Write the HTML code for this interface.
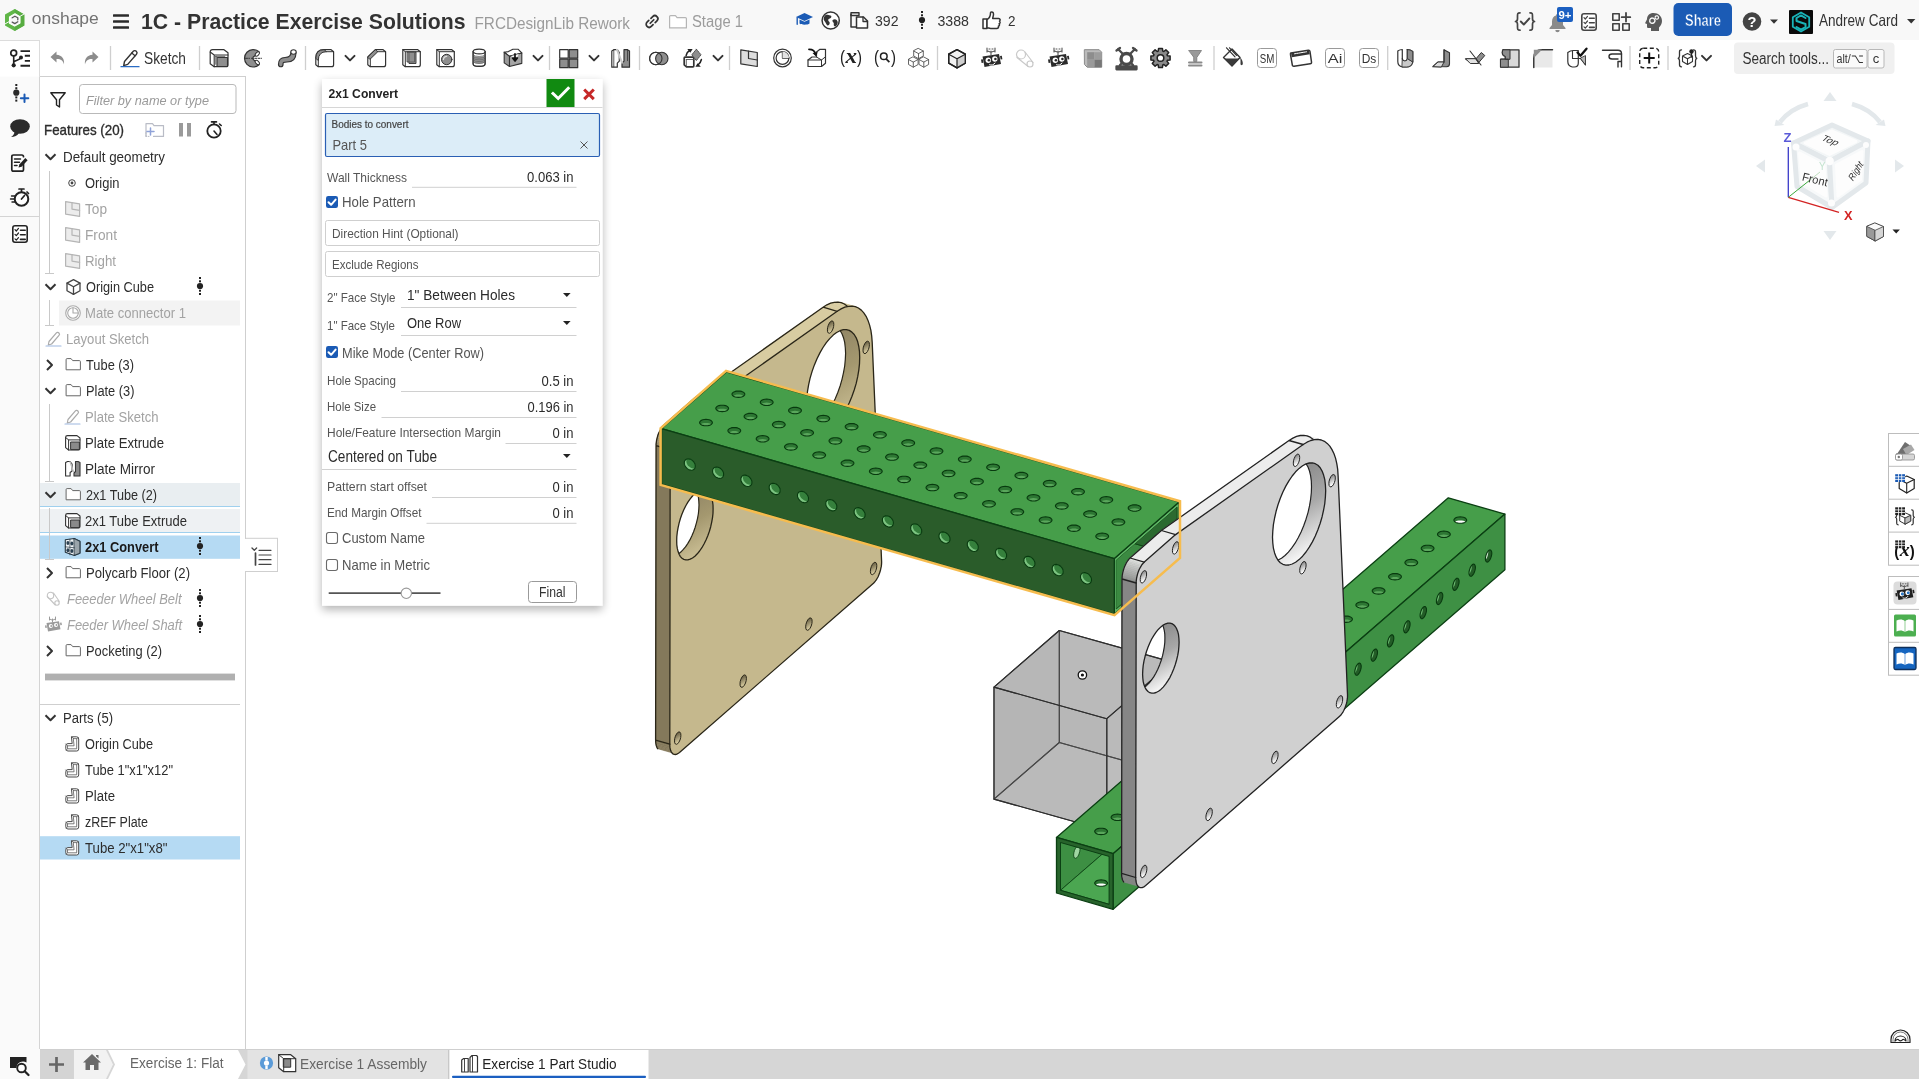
<!DOCTYPE html><html lang="en"><head><meta charset="utf-8"><title>1C - Practice Exercise Solutions | Exercise 1 Part Studio</title><style>html,body{margin:0;padding:0;background:#fff;overflow:hidden}svg{display:block;will-change:transform}text{font-family:"Liberation Sans",sans-serif;white-space:pre}</style></head><body>
<svg width="1919" height="1079" viewBox="0 0 1919 1079">
<g id="chrome">
<rect x="0" y="0" width="1919" height="40" fill="#f8f8f8"/>
<rect x="0" y="40" width="40" height="1039" fill="#fafafa"/>
<line x1="39.5" y1="76" x2="39.5" y2="1049" stroke="#d4d4d4" stroke-width="1" />
<rect x="0" y="40" width="39.5" height="36.5" fill="#ffffff"/>
<line x1="0" y1="40.5" x2="39.5" y2="40.5" stroke="#dcdcdc" stroke-width="1" />
<line x1="39.5" y1="40" x2="39.5" y2="76" stroke="#dcdcdc" stroke-width="1" />
<line x1="0" y1="216.5" x2="39" y2="216.5" stroke="#d4d4d4" stroke-width="1" />
<rect x="40" y="1049" width="1879" height="30" fill="#d6d6d6"/>
</g>
<g id="model" stroke-linejoin="round">
<clipPath id="cht"><path d="M5.5 1.6L6.2 0.8L6.4 0L6.2 -0.8L5.5 -1.6L4.5 -2.3L3.2 -2.8L1.6 -3.1L0 -3.2L-1.7 -3.1L-3.2 -2.8L-4.5 -2.3L-5.5 -1.6L-6.2 -0.8L-6.4 0L-6.2 0.8L-5.5 1.6L-4.5 2.3L-3.2 2.8L-1.6 3.1L0 3.2L1.7 3.1L3.2 2.8L4.5 2.3Z"/></clipPath><defs><g id="ht"><path d="M5.5 1.6L6.2 0.8L6.4 0L6.2 -0.8L5.5 -1.6L4.5 -2.3L3.2 -2.8L1.6 -3.1L0 -3.2L-1.7 -3.1L-3.2 -2.8L-4.5 -2.3L-5.5 -1.6L-6.2 -0.8L-6.4 0L-6.2 0.8L-5.5 1.6L-4.5 2.3L-3.2 2.8L-1.6 3.1L0 3.2L1.7 3.1L3.2 2.8L4.5 2.3Z" fill="#2d7733"/><path d="M5.5 5.1L6.2 4.3L6.4 3.5L6.2 2.7L5.5 1.9L4.5 1.2L3.2 0.7L1.6 0.4L0 0.3L-1.7 0.4L-3.2 0.7L-4.5 1.2L-5.5 1.9L-6.2 2.7L-6.4 3.5L-6.2 4.3L-5.5 5.1L-4.5 5.8L-3.2 6.3L-1.6 6.6L0 6.7L1.7 6.6L3.2 6.3L4.5 5.8Z" fill="#5aa75c" clip-path="url(#cht)"/><path d="M5.5 1.6L6.2 0.8L6.4 0L6.2 -0.8L5.5 -1.6L4.5 -2.3L3.2 -2.8L1.6 -3.1L0 -3.2L-1.7 -3.1L-3.2 -2.8L-4.5 -2.3L-5.5 -1.6L-6.2 -0.8L-6.4 0L-6.2 0.8L-5.5 1.6L-4.5 2.3L-3.2 2.8L-1.6 3.1L0 3.2L1.7 3.1L3.2 2.8L4.5 2.3Z" fill="none" stroke="#083a0f" stroke-width="1.1"/></g></defs>
<clipPath id="cht1"><path d="M5.5 1.6L6.2 0.8L6.4 0L6.2 -0.8L5.5 -1.6L4.5 -2.3L3.2 -2.8L1.6 -3.1L0 -3.2L-1.7 -3.1L-3.2 -2.8L-4.5 -2.3L-5.5 -1.6L-6.2 -0.8L-6.4 0L-6.2 0.8L-5.5 1.6L-4.5 2.3L-3.2 2.8L-1.6 3.1L0 3.2L1.7 3.1L3.2 2.8L4.5 2.3Z"/></clipPath><defs><g id="ht1"><path d="M5.5 1.6L6.2 0.8L6.4 0L6.2 -0.8L5.5 -1.6L4.5 -2.3L3.2 -2.8L1.6 -3.1L0 -3.2L-1.7 -3.1L-3.2 -2.8L-4.5 -2.3L-5.5 -1.6L-6.2 -0.8L-6.4 0L-6.2 0.8L-5.5 1.6L-4.5 2.3L-3.2 2.8L-1.6 3.1L0 3.2L1.7 3.1L3.2 2.8L4.5 2.3Z" fill="#2d7733"/><path d="M5.5 5.1L6.2 4.3L6.4 3.5L6.2 2.7L5.5 1.9L4.5 1.2L3.2 0.7L1.6 0.4L0 0.3L-1.7 0.4L-3.2 0.7L-4.5 1.2L-5.5 1.9L-6.2 2.7L-6.4 3.5L-6.2 4.3L-5.5 5.1L-4.5 5.8L-3.2 6.3L-1.6 6.6L0 6.7L1.7 6.6L3.2 6.3L4.5 5.8Z" fill="#5aa75c" clip-path="url(#cht1)"/><path d="M5.5 1.6L6.2 0.8L6.4 0L6.2 -0.8L5.5 -1.6L4.5 -2.3L3.2 -2.8L1.6 -3.1L0 -3.2L-1.7 -3.1L-3.2 -2.8L-4.5 -2.3L-5.5 -1.6L-6.2 -0.8L-6.4 0L-6.2 0.8L-5.5 1.6L-4.5 2.3L-3.2 2.8L-1.6 3.1L0 3.2L1.7 3.1L3.2 2.8L4.5 2.3Z" fill="none" stroke="#083a0f" stroke-width="1.1"/></g></defs>
<clipPath id="chtw"><path d="M5.5 1.6L6.2 0.8L6.4 0L6.2 -0.8L5.5 -1.6L4.5 -2.3L3.2 -2.8L1.6 -3.1L0 -3.2L-1.7 -3.1L-3.2 -2.8L-4.5 -2.3L-5.5 -1.6L-6.2 -0.8L-6.4 0L-6.2 0.8L-5.5 1.6L-4.5 2.3L-3.2 2.8L-1.6 3.1L0 3.2L1.7 3.1L3.2 2.8L4.5 2.3Z"/></clipPath><defs><g id="htw"><path d="M5.5 1.6L6.2 0.8L6.4 0L6.2 -0.8L5.5 -1.6L4.5 -2.3L3.2 -2.8L1.6 -3.1L0 -3.2L-1.7 -3.1L-3.2 -2.8L-4.5 -2.3L-5.5 -1.6L-6.2 -0.8L-6.4 0L-6.2 0.8L-5.5 1.6L-4.5 2.3L-3.2 2.8L-1.6 3.1L0 3.2L1.7 3.1L3.2 2.8L4.5 2.3Z" fill="#2d7733"/><path d="M5.5 5.1L6.2 4.3L6.4 3.5L6.2 2.7L5.5 1.9L4.5 1.2L3.2 0.7L1.6 0.4L0 0.3L-1.7 0.4L-3.2 0.7L-4.5 1.2L-5.5 1.9L-6.2 2.7L-6.4 3.5L-6.2 4.3L-5.5 5.1L-4.5 5.8L-3.2 6.3L-1.6 6.6L0 6.7L1.7 6.6L3.2 6.3L4.5 5.8Z" fill="#ffffff" clip-path="url(#chtw)"/><path d="M5.5 1.6L6.2 0.8L6.4 0L6.2 -0.8L5.5 -1.6L4.5 -2.3L3.2 -2.8L1.6 -3.1L0 -3.2L-1.7 -3.1L-3.2 -2.8L-4.5 -2.3L-5.5 -1.6L-6.2 -0.8L-6.4 0L-6.2 0.8L-5.5 1.6L-4.5 2.3L-3.2 2.8L-1.6 3.1L0 3.2L1.7 3.1L3.2 2.8L4.5 2.3Z" fill="none" stroke="#083a0f" stroke-width="1.1"/></g></defs>
<clipPath id="chf"><path d="M5.5 1.6L5.4 0.1L4.8 -1.3L3.9 -2.7L2.8 -3.9L1.4 -4.9L0 -5.4L-1.4 -5.7L-2.8 -5.5L-3.9 -5L-4.8 -4.1L-5.4 -2.9L-5.5 -1.6L-5.4 -0.1L-4.8 1.3L-3.9 2.7L-2.8 3.9L-1.4 4.9L0 5.4L1.4 5.7L2.8 5.5L3.9 5L4.8 4.1L5.4 2.9Z"/></clipPath><defs><g id="hf"><path d="M5.5 1.6L5.4 0.1L4.8 -1.3L3.9 -2.7L2.8 -3.9L1.4 -4.9L0 -5.4L-1.4 -5.7L-2.8 -5.5L-3.9 -5L-4.8 -4.1L-5.4 -2.9L-5.5 -1.6L-5.4 -0.1L-4.8 1.3L-3.9 2.7L-2.8 3.9L-1.4 4.9L0 5.4L1.4 5.7L2.8 5.5L3.9 5L4.8 4.1L5.4 2.9Z" fill="#7cc481"/><path d="M7.6 -0.2L7.4 -1.7L6.8 -3.1L6 -4.5L4.8 -5.7L3.5 -6.6L2 -7.2L0.6 -7.5L-0.7 -7.3L-1.9 -6.8L-2.8 -5.9L-3.3 -4.7L-3.5 -3.4L-3.3 -1.9L-2.8 -0.4L-1.9 0.9L-0.7 2.1L0.6 3.1L2 3.7L3.5 3.9L4.8 3.7L6 3.2L6.8 2.3L7.4 1.2Z" fill="#35803c" clip-path="url(#chf)"/><path d="M5.5 1.6L5.4 0.1L4.8 -1.3L3.9 -2.7L2.8 -3.9L1.4 -4.9L0 -5.4L-1.4 -5.7L-2.8 -5.5L-3.9 -5L-4.8 -4.1L-5.4 -2.9L-5.5 -1.6L-5.4 -0.1L-4.8 1.3L-3.9 2.7L-2.8 3.9L-1.4 4.9L0 5.4L1.4 5.7L2.8 5.5L3.9 5L4.8 4.1L5.4 2.9Z" fill="none" stroke="#083a0f" stroke-width="1.1"/></g></defs>
<clipPath id="chs"><path d="M3.2 -2.8L3.1 -4.1L2.7 -5.1L2.2 -5.8L1.6 -6.1L0.8 -6L0 -5.4L-0.8 -4.5L-1.6 -3.3L-2.2 -1.9L-2.7 -0.3L-3.1 1.3L-3.2 2.8L-3.1 4.1L-2.7 5.1L-2.2 5.8L-1.6 6.1L-0.8 6L0 5.4L0.8 4.5L1.6 3.3L2.2 1.9L2.7 0.3L3.1 -1.3Z"/></clipPath><defs><g id="hs"><path d="M3.2 -2.8L3.1 -4.1L2.7 -5.1L2.2 -5.8L1.6 -6.1L0.8 -6L0 -5.4L-0.8 -4.5L-1.6 -3.3L-2.2 -1.9L-2.7 -0.3L-3.1 1.3L-3.2 2.8L-3.1 4.1L-2.7 5.1L-2.2 5.8L-1.6 6.1L-0.8 6L0 5.4L0.8 4.5L1.6 3.3L2.2 1.9L2.7 0.3L3.1 -1.3Z" fill="#235c27"/><path d="M-0.4 -3.8L-0.5 -5.1L-0.8 -6.2L-1.3 -6.8L-2 -7.1L-2.7 -7L-3.6 -6.5L-4.4 -5.6L-5.2 -4.4L-5.8 -2.9L-6.3 -1.3L-6.6 0.2L-6.7 1.8L-6.6 3.1L-6.3 4.1L-5.8 4.8L-5.2 5.1L-4.4 5L-3.6 4.4L-2.7 3.5L-2 2.3L-1.3 0.9L-0.8 -0.7L-0.5 -2.3Z" fill="#6fbd73" clip-path="url(#chs)"/><path d="M3.2 -2.8L3.1 -4.1L2.7 -5.1L2.2 -5.8L1.6 -6.1L0.8 -6L0 -5.4L-0.8 -4.5L-1.6 -3.3L-2.2 -1.9L-2.7 -0.3L-3.1 1.3L-3.2 2.8L-3.1 4.1L-2.7 5.1L-2.2 5.8L-1.6 6.1L-0.8 6L0 5.4L0.8 4.5L1.6 3.3L2.2 1.9L2.7 0.3L3.1 -1.3Z" fill="none" stroke="#083a0f" stroke-width="1.1"/></g></defs>
<clipPath id="chsw"><path d="M3.2 -2.8L3.1 -4.1L2.7 -5.1L2.2 -5.8L1.6 -6.1L0.8 -6L0 -5.4L-0.8 -4.5L-1.6 -3.3L-2.2 -1.9L-2.7 -0.3L-3.1 1.3L-3.2 2.8L-3.1 4.1L-2.7 5.1L-2.2 5.8L-1.6 6.1L-0.8 6L0 5.4L0.8 4.5L1.6 3.3L2.2 1.9L2.7 0.3L3.1 -1.3Z"/></clipPath><defs><g id="hsw"><path d="M3.2 -2.8L3.1 -4.1L2.7 -5.1L2.2 -5.8L1.6 -6.1L0.8 -6L0 -5.4L-0.8 -4.5L-1.6 -3.3L-2.2 -1.9L-2.7 -0.3L-3.1 1.3L-3.2 2.8L-3.1 4.1L-2.7 5.1L-2.2 5.8L-1.6 6.1L-0.8 6L0 5.4L0.8 4.5L1.6 3.3L2.2 1.9L2.7 0.3L3.1 -1.3Z" fill="#235c27"/><path d="M-0.4 -3.8L-0.5 -5.1L-0.8 -6.2L-1.3 -6.8L-2 -7.1L-2.7 -7L-3.6 -6.5L-4.4 -5.6L-5.2 -4.4L-5.8 -2.9L-6.3 -1.3L-6.6 0.2L-6.7 1.8L-6.6 3.1L-6.3 4.1L-5.8 4.8L-5.2 5.1L-4.4 5L-3.6 4.4L-2.7 3.5L-2 2.3L-1.3 0.9L-0.8 -0.7L-0.5 -2.3Z" fill="#d8efd9" clip-path="url(#chsw)"/><path d="M3.2 -2.8L3.1 -4.1L2.7 -5.1L2.2 -5.8L1.6 -6.1L0.8 -6L0 -5.4L-0.8 -4.5L-1.6 -3.3L-2.2 -1.9L-2.7 -0.3L-3.1 1.3L-3.2 2.8L-3.1 4.1L-2.7 5.1L-2.2 5.8L-1.6 6.1L-0.8 6L0 5.4L0.8 4.5L1.6 3.3L2.2 1.9L2.7 0.3L3.1 -1.3Z" fill="none" stroke="#083a0f" stroke-width="1.1"/></g></defs>
<g id="ocube"><polygon points="1059.3,630.5 1172.1,662.1 1172.1,774.1 1059.3,742.5" fill="rgba(125,125,125,0.33)" stroke="#2e2e2e" stroke-width="1.1"/><polygon points="994,687.1 1059.3,630.5 1059.3,742.5 994,799.1" fill="rgba(125,125,125,0.36)" stroke="#2e2e2e" stroke-width="1.1"/><polygon points="994,799.1 1106.8,830.7 1172.1,774.1 1059.3,742.5" fill="rgba(125,125,125,0.3)" stroke="#2e2e2e" stroke-width="1.1"/><polygon points="1106.8,718.7 1172.1,662.1 1172.1,774.1 1106.8,830.7" fill="rgba(125,125,125,0.3)" stroke="#2e2e2e" stroke-width="1.1"/><polygon points="994,687.1 1106.8,718.7 1106.8,830.7 994,799.1" fill="rgba(125,125,125,0.33)" stroke="#2e2e2e" stroke-width="1.1"/><polygon points="994,687.1 1106.8,718.7 1172.1,662.1 1059.3,630.5" fill="rgba(125,125,125,0.3)" stroke="#2e2e2e" stroke-width="1.1"/></g>
<polygon points="1056.5,837.4 1113.1,853.7 1504.9,514.1 1448.3,497.8" fill="#469e4a" stroke="#0b3f13" stroke-width="1.3" />
<polygon points="1113.1,853.7 1504.9,514.1 1504.9,569.7 1113.1,909.3" fill="#3e9044" stroke="#0b3f13" stroke-width="1.3" />
<polygon points="1056.5,837.4 1113.1,853.7 1113.1,909.3 1056.5,893" fill="#27632b" stroke="#0b3f13" stroke-width="1.3" />
<clipPath id="t1in"><polygon points="1060.5,842.5 1109.1,856.4 1109.1,904.3 1060.5,890.3"/></clipPath>
<g clip-path="url(#t1in)">
<polygon points="1060.5,842.5 1109.1,856.4 1109.1,904.3 1060.5,890.3" fill="#3c8c42" />
<polygon points="1060.5,842.5 1452.3,502.9 1452.3,550.7 1060.5,890.3" fill="#3d8f43" stroke="#0b3f13" stroke-width="0.8" />
<polygon points="1060.5,890.3 1109.1,904.3 1500.9,564.7 1452.3,550.7" fill="#4ba651" stroke="#0b3f13" stroke-width="0.8" />
<use href="#htw" x="1101.1" y="883.1"/>
<path d="M1080 849.4L1079.7 847.6L1079 846.4L1078 846.1L1076.8 846.8L1075.6 848.2L1074.5 850.3L1073.9 852.7L1073.6 855L1073.9 856.9L1074.5 858L1075.6 858.3L1076.8 857.7L1078 856.2L1079 854.1L1079.7 851.7Z" fill="#9fd6a2" stroke="#0b3f13" stroke-width="0.8"/>
</g>
<polygon points="1060.5,842.5 1109.1,856.4 1109.1,904.3 1060.5,890.3" fill="none" stroke="#0b3f13" stroke-width="1"/>
<use href="#ht1" x="1101.1" y="831.4"/><use href="#ht1" x="1117.5" y="817.3"/><use href="#ht1" x="1133.8" y="803.1"/><use href="#ht1" x="1150.1" y="789"/><use href="#ht1" x="1166.4" y="774.8"/><use href="#ht1" x="1182.8" y="760.7"/><use href="#ht1" x="1199.1" y="746.5"/><use href="#ht1" x="1215.4" y="732.4"/><use href="#ht1" x="1231.7" y="718.2"/><use href="#ht1" x="1248" y="704.1"/><use href="#ht1" x="1264.4" y="689.9"/><use href="#ht1" x="1280.7" y="675.8"/><use href="#ht1" x="1297" y="661.6"/><use href="#ht1" x="1313.3" y="647.5"/><use href="#ht1" x="1329.7" y="633.3"/><use href="#ht1" x="1346" y="619.2"/><use href="#ht1" x="1362.3" y="605"/><use href="#ht1" x="1378.6" y="590.9"/><use href="#ht1" x="1395" y="576.7"/><use href="#ht1" x="1411.3" y="562.6"/><use href="#ht1" x="1427.6" y="548.4"/><use href="#ht1" x="1443.9" y="534.3"/>
<use href="#htw" x="1460.3" y="520.1"/>
<use href="#hs" x="1129.4" y="867.3"/><use href="#hs" x="1145.8" y="853.2"/><use href="#hs" x="1162.1" y="839"/><use href="#hs" x="1178.4" y="824.9"/><use href="#hs" x="1194.7" y="810.7"/><use href="#hs" x="1211" y="796.6"/><use href="#hs" x="1227.4" y="782.4"/><use href="#hs" x="1243.7" y="768.3"/><use href="#hs" x="1260" y="754.1"/><use href="#hs" x="1276.3" y="740"/><use href="#hs" x="1292.7" y="725.8"/><use href="#hs" x="1309" y="711.7"/><use href="#hs" x="1325.3" y="697.5"/><use href="#hs" x="1341.6" y="683.4"/><use href="#hs" x="1358" y="669.2"/><use href="#hs" x="1374.3" y="655.1"/><use href="#hs" x="1390.6" y="640.9"/><use href="#hs" x="1406.9" y="626.8"/><use href="#hs" x="1423.3" y="612.6"/><use href="#hs" x="1439.6" y="598.5"/><use href="#hs" x="1455.9" y="584.3"/><use href="#hs" x="1472.2" y="570.2"/>
<use href="#hsw" x="1488.6" y="556"/>
<g transform="translate(1,1.2)">
<polygon points="655.1,444.5 655.1,442.9 669.3,447 669.2,448.6" fill="#897e5f" stroke="#897e5f" stroke-width="0.6"/>
<polygon points="655.1,442.9 655.3,441.3 669.4,445.3 669.3,447" fill="#908565" stroke="#908565" stroke-width="0.6"/>
<polygon points="655.3,441.3 655.5,439.5 669.7,443.6 669.4,445.3" fill="#978c6b" stroke="#978c6b" stroke-width="0.6"/>
<polygon points="655.5,439.5 655.9,437.8 670,441.9 669.7,443.6" fill="#9d9170" stroke="#9d9170" stroke-width="0.6"/>
<polygon points="655.9,437.8 656.3,436.1 670.5,440.1 670,441.9" fill="#a29774" stroke="#a29774" stroke-width="0.6"/>
<polygon points="656.3,436.1 656.8,434.3 671,438.4 670.5,440.1" fill="#a79b78" stroke="#a79b78" stroke-width="0.6"/>
<polygon points="656.8,434.3 657.4,432.6 671.6,436.7 671,438.4" fill="#aca07c" stroke="#aca07c" stroke-width="0.6"/>
<polygon points="657.4,432.6 658.1,431 672.3,435.1 671.6,436.7" fill="#b0a580" stroke="#b0a580" stroke-width="0.6"/>
<polygon points="658.1,431 658.9,429.5 673,433.5 672.3,435.1" fill="#b5aa84" stroke="#b5aa84" stroke-width="0.6"/>
<polygon points="658.9,429.5 659.7,428 673.8,432.1 673,433.5" fill="#baae88" stroke="#baae88" stroke-width="0.6"/>
<polygon points="659.7,428 660.5,426.7 674.6,430.8 673.8,432.1" fill="#bfb48c" stroke="#bfb48c" stroke-width="0.6"/>
<polygon points="660.5,426.7 661.4,425.5 675.5,429.6 674.6,430.8" fill="#c5b991" stroke="#c5b991" stroke-width="0.6"/>
<polygon points="661.4,425.5 662.3,424.5 676.4,428.5 675.5,429.6" fill="#ccc097" stroke="#ccc097" stroke-width="0.6"/>
<polygon points="662.3,424.5 663.2,423.6 677.3,427.6 676.4,428.5" fill="#d3c79d" stroke="#d3c79d" stroke-width="0.6"/>
<polygon points="663.2,423.6 694.5,396.1 708.6,400.1 677.3,427.6" fill="#d8cca1" stroke="#d8cca1" stroke-width="0.6"/>
<polygon points="694.5,396.1 822.1,306 836.2,310.1 708.6,400.1" fill="#d8cca1" stroke="#d8cca1" stroke-width="0.6"/>
<polygon points="822.1,306 825.9,303.6 840.1,307.7 836.2,310.1" fill="#d8cca1" stroke="#d8cca1" stroke-width="0.6"/>
<polygon points="825.9,303.6 829.7,302 843.8,306 840.1,307.7" fill="#d8cca1" stroke="#d8cca1" stroke-width="0.6"/>
<polygon points="829.7,302 833.3,301.1 847.5,305.1 843.8,306" fill="#d8cca1" stroke="#d8cca1" stroke-width="0.6"/>
<polygon points="833.3,301.1 836.8,300.9 851,304.9 847.5,305.1" fill="#d8cca1" stroke="#d8cca1" stroke-width="0.6"/>
<polygon points="836.8,300.9 840.2,301.5 854.3,305.5 851,304.9" fill="#d8cca1" stroke="#d8cca1" stroke-width="0.6"/>
<polygon points="840.2,301.5 843.3,302.8 857.4,306.8 854.3,305.5" fill="#d8cca1" stroke="#d8cca1" stroke-width="0.6"/>
<polygon points="843.3,302.8 846.1,304.8 860.3,308.9 857.4,306.8" fill="#d8cca1" stroke="#d8cca1" stroke-width="0.6"/>
<polygon points="656.7,747.5 656.1,746.6 670.3,750.6 670.9,751.6" fill="#84795b" stroke="#84795b" stroke-width="0.6"/>
<polygon points="656.1,746.6 655.6,745.4 669.7,749.4 670.3,750.6" fill="#84795b" stroke="#84795b" stroke-width="0.6"/>
<polygon points="655.6,745.4 655.2,744 669.3,748.1 669.7,749.4" fill="#84795b" stroke="#84795b" stroke-width="0.6"/>
<polygon points="655.2,744 654.9,742.5 669,746.5 669.3,748.1" fill="#84795b" stroke="#84795b" stroke-width="0.6"/>
<polygon points="654.9,742.5 654.7,740.8 668.8,744.8 669,746.5" fill="#84795b" stroke="#84795b" stroke-width="0.6"/>
<polygon points="654.7,740.8 654.6,739 668.8,743 668.8,744.8" fill="#84795b" stroke="#84795b" stroke-width="0.6"/>
<polygon points="654.6,739 655.1,444.5 669.2,448.6 668.8,743" fill="#84795b" stroke="#84795b" stroke-width="0.6"/>
<path d="M669.2 448.6L669.3 447L669.4 445.3L669.7 443.6L670 441.9L670.5 440.1L671 438.4L671.6 436.7L672.3 435.1L673 433.5L673.8 432.1L674.6 430.8L675.5 429.6L676.4 428.5L677.3 427.6L708.6 400.1L836.2 310.1L840.1 307.7L843.8 306L847.5 305.1L851 304.9L854.3 305.5L857.4 306.8L860.3 308.9L862.8 311.7L865.1 315.1L867 319.2L868.6 323.9L869.9 329.2L870.7 334.9L871.2 341.2L880.6 560.1L880.6 561.7L880.5 563.4L880.3 565.2L879.9 567L879.5 568.8L879 570.6L878.4 572.4L877.7 574.1L877 575.8L876.1 577.3L875.3 578.7L874.3 580L873.4 581.1L872.5 582L678.5 751.3L677.4 752.1L676.3 752.7L675.3 753.1L674.3 753.3L673.3 753.2L672.4 752.9L671.6 752.4L670.9 751.6L670.3 750.6L669.7 749.4L669.3 748.1L669 746.5L668.8 744.8L668.8 743Z" fill="#c5b88d" stroke="#2a2618" stroke-width="1.3"/>
<path d="M655.1 444.5L655.1 442.9L655.3 441.3L655.5 439.5L655.9 437.8L656.3 436.1L656.8 434.3L657.4 432.6L658.1 431L658.9 429.5L659.7 428L660.5 426.7L661.4 425.5L662.3 424.5L663.2 423.6L694.5 396.1L822.1 306L825.9 303.6L829.7 302L833.3 301.1L836.8 300.9L840.2 301.5L843.3 302.8L846.1 304.8M656.7 747.5L656.1 746.6L655.6 745.4L655.2 744L654.9 742.5L654.7 740.8L654.6 739L655.1 444.5M655.1 444.5L669.2 448.6M663.2 423.6L677.3 427.6M694.5 396.1L708.6 400.1M822.1 306L836.2 310.1M654.6 739L668.8 743" fill="none" stroke="#2a2618" stroke-width="1.3" stroke-linecap="round"/>
<linearGradient id="wgT" x1="0" y1="0" x2="0.3" y2="1"><stop offset="0" stop-color="#8a7f62"/><stop offset="0.55" stop-color="#a4986f"/><stop offset="1" stop-color="#c9bd93"/></linearGradient>
<clipPath id="hcT0"><path d="M858.7 356.3L858.5 350.5L857.8 345.3L856.7 340.6L855.2 336.6L853.2 333.3L850.9 330.9L848.3 329.2L845.4 328.4L842.3 328.5L839 329.5L835.6 331.3L832.2 333.9L828.7 337.4L825.3 341.5L822 346.3L818.9 351.7L816 357.5L813.4 363.7L811.1 370.2L809.1 376.9L807.6 383.6L806.5 390.2L805.8 396.6L805.6 402.8L805.8 408.5L806.5 413.8L807.6 418.5L809.1 422.5L811.1 425.7L813.4 428.2L816 429.8L818.9 430.6L822 430.5L825.3 429.6L828.7 427.8L832.2 425.1L835.6 421.7L839 417.5L842.3 412.8L845.4 407.4L848.3 401.5L850.9 395.3L853.2 388.8L855.2 382.2L856.7 375.5L857.8 368.9L858.5 362.4Z"/></clipPath>
<path d="M858.7 356.3L858.5 350.5L857.8 345.3L856.7 340.6L855.2 336.6L853.2 333.3L850.9 330.9L848.3 329.2L845.4 328.4L842.3 328.5L839 329.5L835.6 331.3L832.2 333.9L828.7 337.4L825.3 341.5L822 346.3L818.9 351.7L816 357.5L813.4 363.7L811.1 370.2L809.1 376.9L807.6 383.6L806.5 390.2L805.8 396.6L805.6 402.8L805.8 408.5L806.5 413.8L807.6 418.5L809.1 422.5L811.1 425.7L813.4 428.2L816 429.8L818.9 430.6L822 430.5L825.3 429.6L828.7 427.8L832.2 425.1L835.6 421.7L839 417.5L842.3 412.8L845.4 407.4L848.3 401.5L850.9 395.3L853.2 388.8L855.2 382.2L856.7 375.5L857.8 368.9L858.5 362.4Z" fill="url(#wgT)"/>
<g clip-path="url(#hcT0)"><path d="M844.6 352.2L844.3 346.5L843.7 341.2L842.5 336.5L841 332.5L839.1 329.3L836.8 326.8L834.2 325.1L831.3 324.4L828.2 324.4L824.9 325.4L821.5 327.2L818 329.9L814.5 333.3L811.1 337.4L807.8 342.2L804.7 347.6L801.8 353.4L799.2 359.7L796.9 366.2L795 372.8L793.5 379.5L792.3 386.1L791.7 392.6L791.4 398.7L791.7 404.5L792.3 409.7L793.5 414.4L795 418.4L796.9 421.7L799.2 424.1L801.8 425.8L804.7 426.6L807.8 426.5L811.1 425.5L814.5 423.7L818 421.1L821.5 417.6L824.9 413.5L828.2 408.7L831.3 403.3L834.2 397.5L836.8 391.3L839.1 384.8L841 378.1L842.5 371.4L843.7 364.8L844.3 358.4Z" fill="#ffffff"/><path d="M844.6 352.2L844.3 346.5L843.7 341.2L842.5 336.5L841 332.5L839.1 329.3L836.8 326.8L834.2 325.1L831.3 324.4L828.2 324.4L824.9 325.4L821.5 327.2L818 329.9L814.5 333.3L811.1 337.4L807.8 342.2L804.7 347.6L801.8 353.4L799.2 359.7L796.9 366.2L795 372.8L793.5 379.5L792.3 386.1L791.7 392.6L791.4 398.7L791.7 404.5L792.3 409.7L793.5 414.4L795 418.4L796.9 421.7L799.2 424.1L801.8 425.8L804.7 426.6L807.8 426.5L811.1 425.5L814.5 423.7L818 421.1L821.5 417.6L824.9 413.5L828.2 408.7L831.3 403.3L834.2 397.5L836.8 391.3L839.1 384.8L841 378.1L842.5 371.4L843.7 364.8L844.3 358.4Z" fill="none" stroke="#2a2618" stroke-width="1.2"/></g>
<path d="M858.7 356.3L858.5 350.5L857.8 345.3L856.7 340.6L855.2 336.6L853.2 333.3L850.9 330.9L848.3 329.2L845.4 328.4L842.3 328.5L839 329.5L835.6 331.3L832.2 333.9L828.7 337.4L825.3 341.5L822 346.3L818.9 351.7L816 357.5L813.4 363.7L811.1 370.2L809.1 376.9L807.6 383.6L806.5 390.2L805.8 396.6L805.6 402.8L805.8 408.5L806.5 413.8L807.6 418.5L809.1 422.5L811.1 425.7L813.4 428.2L816 429.8L818.9 430.6L822 430.5L825.3 429.6L828.7 427.8L832.2 425.1L835.6 421.7L839 417.5L842.3 412.8L845.4 407.4L848.3 401.5L850.9 395.3L853.2 388.8L855.2 382.2L856.7 375.5L857.8 368.9L858.5 362.4Z" fill="none" stroke="#2a2618" stroke-width="1.3"/>
<clipPath id="hcT1"><path d="M712.1 507.7L712 503.8L711.5 500.2L710.7 497L709.7 494.2L708.4 492L706.8 490.3L705 489.2L703 488.6L700.9 488.7L698.6 489.3L696.3 490.6L693.9 492.4L691.5 494.8L689.2 497.6L686.9 500.9L684.8 504.6L682.8 508.6L681 512.8L679.4 517.3L678.1 521.9L677.1 526.4L676.3 531L675.8 535.4L675.7 539.6L675.8 543.6L676.3 547.2L677.1 550.4L678.1 553.1L679.4 555.4L681 557.1L682.8 558.2L684.8 558.7L686.9 558.7L689.2 558L691.5 556.8L693.9 555L696.3 552.6L698.6 549.8L700.9 546.5L703 542.8L705 538.8L706.8 534.5L708.4 530.1L709.7 525.5L710.7 520.9L711.5 516.4L712 512Z"/></clipPath>
<path d="M712.1 507.7L712 503.8L711.5 500.2L710.7 497L709.7 494.2L708.4 492L706.8 490.3L705 489.2L703 488.6L700.9 488.7L698.6 489.3L696.3 490.6L693.9 492.4L691.5 494.8L689.2 497.6L686.9 500.9L684.8 504.6L682.8 508.6L681 512.8L679.4 517.3L678.1 521.9L677.1 526.4L676.3 531L675.8 535.4L675.7 539.6L675.8 543.6L676.3 547.2L677.1 550.4L678.1 553.1L679.4 555.4L681 557.1L682.8 558.2L684.8 558.7L686.9 558.7L689.2 558L691.5 556.8L693.9 555L696.3 552.6L698.6 549.8L700.9 546.5L703 542.8L705 538.8L706.8 534.5L708.4 530.1L709.7 525.5L710.7 520.9L711.5 516.4L712 512Z" fill="url(#wgT)"/>
<g clip-path="url(#hcT1)"><path d="M698 503.7L697.8 499.7L697.4 496.1L696.6 492.9L695.5 490.2L694.2 487.9L692.6 486.2L690.8 485.1L688.9 484.6L686.7 484.6L684.5 485.3L682.1 486.5L679.8 488.3L677.4 490.7L675 493.5L672.8 496.8L670.6 500.5L668.7 504.5L666.9 508.8L665.3 513.2L664 517.8L662.9 522.4L662.1 526.9L661.7 531.3L661.5 535.6L661.7 539.5L662.1 543.1L662.9 546.3L664 549.1L665.3 551.3L666.9 553L668.7 554.1L670.6 554.7L672.8 554.6L675 554L677.4 552.7L679.8 550.9L682.1 548.5L684.5 545.7L686.7 542.4L688.9 538.7L690.8 534.7L692.6 530.5L694.2 526L695.5 521.4L696.6 516.9L697.4 512.3L697.8 507.9Z" fill="#ffffff"/><path d="M698 503.7L697.8 499.7L697.4 496.1L696.6 492.9L695.5 490.2L694.2 487.9L692.6 486.2L690.8 485.1L688.9 484.6L686.7 484.6L684.5 485.3L682.1 486.5L679.8 488.3L677.4 490.7L675 493.5L672.8 496.8L670.6 500.5L668.7 504.5L666.9 508.8L665.3 513.2L664 517.8L662.9 522.4L662.1 526.9L661.7 531.3L661.5 535.6L661.7 539.5L662.1 543.1L662.9 546.3L664 549.1L665.3 551.3L666.9 553L668.7 554.1L670.6 554.7L672.8 554.6L675 554L677.4 552.7L679.8 550.9L682.1 548.5L684.5 545.7L686.7 542.4L688.9 538.7L690.8 534.7L692.6 530.5L694.2 526L695.5 521.4L696.6 516.9L697.4 512.3L697.8 507.9Z" fill="none" stroke="#2a2618" stroke-width="1.2"/></g>
<path d="M712.1 507.7L712 503.8L711.5 500.2L710.7 497L709.7 494.2L708.4 492L706.8 490.3L705 489.2L703 488.6L700.9 488.7L698.6 489.3L696.3 490.6L693.9 492.4L691.5 494.8L689.2 497.6L686.9 500.9L684.8 504.6L682.8 508.6L681 512.8L679.4 517.3L678.1 521.9L677.1 526.4L676.3 531L675.8 535.4L675.7 539.6L675.8 543.6L676.3 547.2L677.1 550.4L678.1 553.1L679.4 555.4L681 557.1L682.8 558.2L684.8 558.7L686.9 558.7L689.2 558L691.5 556.8L693.9 555L696.3 552.6L698.6 549.8L700.9 546.5L703 542.8L705 538.8L706.8 534.5L708.4 530.1L709.7 525.5L710.7 520.9L711.5 516.4L712 512Z" fill="none" stroke="#2a2618" stroke-width="1.3"/>
<defs><linearGradient id="gshT" x1="0.3" y1="0" x2="0.6" y2="1"><stop offset="0.15" stop-color="#6d6448"/><stop offset="0.85" stop-color="#d6ca9e"/></linearGradient><g id="shT"><path d="M3.2 -2.8L3 -4.7L2.3 -5.9L1.2 -6.2L0 -5.6L-1.2 -4.1L-2.3 -1.9L-3 0.5L-3.2 2.8L-3 4.7L-2.3 5.9L-1.2 6.2L0 5.6L1.2 4.1L2.3 1.9L3 -0.5Z" fill="url(#gshT)" stroke="#2a2618" stroke-width="1"/></g></defs>
<use href="#shT" x="829.6" y="325.9"/>
<use href="#shT" x="865.2" y="346.2"/>
<use href="#shT" x="836" y="433.3"/>
<use href="#shT" x="708.6" y="413.4"/>
<use href="#shT" x="676.4" y="442.3"/>
<use href="#shT" x="872.6" y="567.3"/>
<use href="#shT" x="807.9" y="622.9"/>
<use href="#shT" x="742.2" y="679.9"/>
<use href="#shT" x="676.7" y="736.9"/>
</g>
<polygon points="1114.3,558.6 1179.1,501.9 1179.1,557.5 1114.3,614.2" fill="#5fb565" stroke="#0b3f13" stroke-width="1.3" />
<polygon points="1116.3,560.3 1177.1,507.2 1177.1,555.8 1116.3,608.9" fill="#2f7334" stroke="#0b3f13" stroke-width="0.8" />
<clipPath id="t2in"><polygon points="1116.3,560.3 1177.1,507.2 1177.1,555.8 1116.3,608.9"/></clipPath>
<g clip-path="url(#t2in)">
<polygon points="1116.3,608.9 1177.1,555.8 724.3,425.8 663.5,478.9" fill="#3b8a41" stroke="#0b3f13" stroke-width="0.8" />
<polygon points="1177.1,507.2 1177.1,555.8 724.3,425.8 724.3,377.2" fill="#2b6a30" stroke="#0b3f13" stroke-width="0.8" />
</g>
<polygon points="661.5,428.6 1114.3,558.6 1179.1,501.9 726.3,371.9" fill="#469e4a" stroke="#0b3f13" stroke-width="1.3" />
<polygon points="661.5,428.6 1114.3,558.6 1114.3,614.2 661.5,484.2" fill="#2a5c2a" stroke="#0b3f13" stroke-width="1.3" />
<use href="#ht" x="706" y="422.6"/><use href="#ht" x="734.3" y="430.7"/><use href="#ht" x="762.6" y="438.8"/><use href="#ht" x="790.9" y="446.9"/><use href="#ht" x="819.2" y="455.1"/><use href="#ht" x="847.5" y="463.2"/><use href="#ht" x="875.8" y="471.3"/><use href="#ht" x="904.1" y="479.4"/><use href="#ht" x="932.4" y="487.6"/><use href="#ht" x="960.7" y="495.7"/><use href="#ht" x="989" y="503.8"/><use href="#ht" x="1017.3" y="511.9"/><use href="#ht" x="1045.6" y="520.1"/><use href="#ht" x="1073.9" y="528.2"/><use href="#ht" x="1102.2" y="536.3"/><use href="#ht" x="722.2" y="408.4"/><use href="#ht" x="750.5" y="416.5"/><use href="#ht" x="778.8" y="424.6"/><use href="#ht" x="807.1" y="432.8"/><use href="#ht" x="835.4" y="440.9"/><use href="#ht" x="863.7" y="449"/><use href="#ht" x="892" y="457.1"/><use href="#ht" x="920.3" y="465.2"/><use href="#ht" x="948.6" y="473.4"/><use href="#ht" x="976.9" y="481.5"/><use href="#ht" x="1005.2" y="489.6"/><use href="#ht" x="1033.5" y="497.8"/><use href="#ht" x="1061.8" y="505.9"/><use href="#ht" x="1090.1" y="514"/><use href="#ht" x="1118.4" y="522.1"/><use href="#ht" x="738.4" y="394.2"/><use href="#ht" x="766.7" y="402.3"/><use href="#ht" x="795" y="410.5"/><use href="#ht" x="823.3" y="418.6"/><use href="#ht" x="851.6" y="426.7"/><use href="#ht" x="879.9" y="434.8"/><use href="#ht" x="908.2" y="443"/><use href="#ht" x="936.5" y="451.1"/><use href="#ht" x="964.8" y="459.2"/><use href="#ht" x="993.1" y="467.3"/><use href="#ht" x="1021.4" y="475.5"/><use href="#ht" x="1049.7" y="483.6"/><use href="#ht" x="1078" y="491.7"/><use href="#ht" x="1106.3" y="499.8"/><use href="#ht" x="1134.6" y="508"/>
<use href="#hf" x="689.8" y="464.5"/><use href="#hf" x="718.1" y="472.7"/><use href="#hf" x="746.4" y="480.8"/><use href="#hf" x="774.7" y="488.9"/><use href="#hf" x="803" y="497"/><use href="#hf" x="831.3" y="505.2"/><use href="#hf" x="859.6" y="513.3"/><use href="#hf" x="887.9" y="521.4"/><use href="#hf" x="916.2" y="529.5"/><use href="#hf" x="944.5" y="537.6"/><use href="#hf" x="972.8" y="545.8"/><use href="#hf" x="1001.1" y="553.9"/><use href="#hf" x="1029.4" y="562"/><use href="#hf" x="1057.7" y="570.1"/><use href="#hf" x="1086" y="578.3"/>
<g transform="translate(0,0.4)">
<polygon points="1122,578.6 1122.1,577 1136.2,581 1136.2,582.6" fill="#8c8c8c" stroke="#8c8c8c" stroke-width="0.6"/>
<polygon points="1122.1,577 1122.2,575.3 1136.4,579.4 1136.2,581" fill="#959595" stroke="#959595" stroke-width="0.6"/>
<polygon points="1122.2,575.3 1122.5,573.6 1136.6,577.7 1136.4,579.4" fill="#9d9d9d" stroke="#9d9d9d" stroke-width="0.6"/>
<polygon points="1122.5,573.6 1122.8,571.9 1137,575.9 1136.6,577.7" fill="#a4a4a4" stroke="#a4a4a4" stroke-width="0.6"/>
<polygon points="1122.8,571.9 1123.3,570.1 1137.4,574.2 1137,575.9" fill="#aaaaaa" stroke="#aaaaaa" stroke-width="0.6"/>
<polygon points="1123.3,570.1 1123.8,568.4 1137.9,572.5 1137.4,574.2" fill="#b0b0b0" stroke="#b0b0b0" stroke-width="0.6"/>
<polygon points="1123.8,568.4 1124.4,566.7 1138.5,570.8 1137.9,572.5" fill="#b6b6b6" stroke="#b6b6b6" stroke-width="0.6"/>
<polygon points="1124.4,566.7 1125.1,565.1 1139.2,569.1 1138.5,570.8" fill="#bcbcbc" stroke="#bcbcbc" stroke-width="0.6"/>
<polygon points="1125.1,565.1 1125.8,563.5 1140,567.6 1139.2,569.1" fill="#c2c2c2" stroke="#c2c2c2" stroke-width="0.6"/>
<polygon points="1125.8,563.5 1126.6,562.1 1140.8,566.2 1140,567.6" fill="#c8c8c8" stroke="#c8c8c8" stroke-width="0.6"/>
<polygon points="1126.6,562.1 1127.4,560.8 1141.6,564.8 1140.8,566.2" fill="#cecece" stroke="#cecece" stroke-width="0.6"/>
<polygon points="1127.4,560.8 1128.3,559.6 1142.5,563.6 1141.6,564.8" fill="#d5d5d5" stroke="#d5d5d5" stroke-width="0.6"/>
<polygon points="1128.3,559.6 1129.2,558.5 1143.4,562.6 1142.5,563.6" fill="#dddddd" stroke="#dddddd" stroke-width="0.6"/>
<polygon points="1129.2,558.5 1130.1,557.6 1144.3,561.7 1143.4,562.6" fill="#e6e6e6" stroke="#e6e6e6" stroke-width="0.6"/>
<polygon points="1130.1,557.6 1161.4,530.1 1175.6,534.2 1144.3,561.7" fill="#ececec" stroke="#ececec" stroke-width="0.6"/>
<polygon points="1161.4,530.1 1289,440.1 1303.2,444.1 1175.6,534.2" fill="#ececec" stroke="#ececec" stroke-width="0.6"/>
<polygon points="1289,440.1 1292.9,437.7 1307,441.8 1303.2,444.1" fill="#ececec" stroke="#ececec" stroke-width="0.6"/>
<polygon points="1292.9,437.7 1296.6,436 1310.8,440.1 1307,441.8" fill="#ececec" stroke="#ececec" stroke-width="0.6"/>
<polygon points="1296.6,436 1300.3,435.1 1314.4,439.2 1310.8,440.1" fill="#ececec" stroke="#ececec" stroke-width="0.6"/>
<polygon points="1300.3,435.1 1303.8,434.9 1317.9,439 1314.4,439.2" fill="#ececec" stroke="#ececec" stroke-width="0.6"/>
<polygon points="1303.8,434.9 1307.1,435.5 1321.3,439.6 1317.9,439" fill="#ececec" stroke="#ececec" stroke-width="0.6"/>
<polygon points="1307.1,435.5 1310.2,436.8 1324.4,440.9 1321.3,439.6" fill="#ececec" stroke="#ececec" stroke-width="0.6"/>
<polygon points="1310.2,436.8 1313.1,438.9 1327.2,443 1324.4,440.9" fill="#ececec" stroke="#ececec" stroke-width="0.6"/>
<polygon points="1123.7,881.6 1123.1,880.6 1137.2,884.7 1137.8,885.7" fill="#868686" stroke="#868686" stroke-width="0.6"/>
<polygon points="1123.1,880.6 1122.5,879.4 1136.7,883.5 1137.2,884.7" fill="#868686" stroke="#868686" stroke-width="0.6"/>
<polygon points="1122.5,879.4 1122.1,878.1 1136.3,882.1 1136.7,883.5" fill="#868686" stroke="#868686" stroke-width="0.6"/>
<polygon points="1122.1,878.1 1121.8,876.5 1136,880.6 1136.3,882.1" fill="#868686" stroke="#868686" stroke-width="0.6"/>
<polygon points="1121.8,876.5 1121.6,874.8 1135.8,878.9 1136,880.6" fill="#868686" stroke="#868686" stroke-width="0.6"/>
<polygon points="1121.6,874.8 1121.6,873 1135.7,877.1 1135.8,878.9" fill="#868686" stroke="#868686" stroke-width="0.6"/>
<polygon points="1121.6,873 1122,578.6 1136.2,582.6 1135.7,877.1" fill="#868686" stroke="#868686" stroke-width="0.6"/>
<path d="M1136.2 582.6L1136.2 581L1136.4 579.4L1136.6 577.7L1137 575.9L1137.4 574.2L1137.9 572.5L1138.5 570.8L1139.2 569.1L1140 567.6L1140.8 566.2L1141.6 564.8L1142.5 563.6L1143.4 562.6L1144.3 561.7L1175.6 534.2L1303.2 444.1L1307 441.8L1310.8 440.1L1314.4 439.2L1317.9 439L1321.3 439.6L1324.4 440.9L1327.2 443L1329.8 445.7L1332 449.2L1334 453.3L1335.6 458L1336.8 463.2L1337.7 469L1338.1 475.2L1347.5 694.1L1347.5 695.8L1347.4 697.5L1347.2 699.2L1346.9 701L1346.5 702.9L1346 704.7L1345.3 706.5L1344.7 708.2L1343.9 709.9L1343.1 711.4L1342.2 712.8L1341.3 714.1L1340.4 715.2L1339.4 716.1L1145.4 885.3L1144.3 886.2L1143.3 886.8L1142.2 887.2L1141.2 887.3L1140.3 887.3L1139.4 887L1138.6 886.4L1137.8 885.7L1137.2 884.7L1136.7 883.5L1136.3 882.1L1136 880.6L1135.8 878.9L1135.7 877.1Z" fill="#d0d0d0" stroke="#222222" stroke-width="1.3"/>
<path d="M1122 578.6L1122.1 577L1122.2 575.3L1122.5 573.6L1122.8 571.9L1123.3 570.1L1123.8 568.4L1124.4 566.7L1125.1 565.1L1125.8 563.5L1126.6 562.1L1127.4 560.8L1128.3 559.6L1129.2 558.5L1130.1 557.6L1161.4 530.1L1289 440.1L1292.9 437.7L1296.6 436L1300.3 435.1L1303.8 434.9L1307.1 435.5L1310.2 436.8L1313.1 438.9M1123.7 881.6L1123.1 880.6L1122.5 879.4L1122.1 878.1L1121.8 876.5L1121.6 874.8L1121.6 873L1122 578.6M1122 578.6L1136.2 582.6M1130.1 557.6L1144.3 561.7M1161.4 530.1L1175.6 534.2M1289 440.1L1303.2 444.1M1121.6 873L1135.7 877.1" fill="none" stroke="#222222" stroke-width="1.3" stroke-linecap="round"/>
<linearGradient id="wgG" x1="0" y1="0" x2="0.3" y2="1"><stop offset="0" stop-color="#7e7e7e"/><stop offset="0.55" stop-color="#a8a8a8"/><stop offset="1" stop-color="#f6f6f6"/></linearGradient>
<clipPath id="hcG0"><path d="M1325.7 490.3L1325.4 484.6L1324.8 479.3L1323.6 474.7L1322.1 470.7L1320.2 467.4L1317.9 464.9L1315.3 463.3L1312.4 462.5L1309.3 462.6L1306 463.5L1302.6 465.4L1299.1 468L1295.6 471.4L1292.2 475.6L1288.9 480.4L1285.8 485.7L1282.9 491.6L1280.3 497.8L1278 504.3L1276.1 510.9L1274.6 517.6L1273.4 524.2L1272.8 530.7L1272.5 536.8L1272.8 542.6L1273.4 547.8L1274.6 552.5L1276.1 556.5L1278 559.8L1280.3 562.3L1282.9 563.9L1285.8 564.7L1288.9 564.6L1292.2 563.6L1295.6 561.8L1299.1 559.2L1302.6 555.8L1306 551.6L1309.3 546.8L1312.4 541.5L1315.3 535.6L1317.9 529.4L1320.2 522.9L1322.1 516.3L1323.6 509.6L1324.8 502.9L1325.4 496.5Z"/></clipPath>
<path d="M1325.7 490.3L1325.4 484.6L1324.8 479.3L1323.6 474.7L1322.1 470.7L1320.2 467.4L1317.9 464.9L1315.3 463.3L1312.4 462.5L1309.3 462.6L1306 463.5L1302.6 465.4L1299.1 468L1295.6 471.4L1292.2 475.6L1288.9 480.4L1285.8 485.7L1282.9 491.6L1280.3 497.8L1278 504.3L1276.1 510.9L1274.6 517.6L1273.4 524.2L1272.8 530.7L1272.5 536.8L1272.8 542.6L1273.4 547.8L1274.6 552.5L1276.1 556.5L1278 559.8L1280.3 562.3L1282.9 563.9L1285.8 564.7L1288.9 564.6L1292.2 563.6L1295.6 561.8L1299.1 559.2L1302.6 555.8L1306 551.6L1309.3 546.8L1312.4 541.5L1315.3 535.6L1317.9 529.4L1320.2 522.9L1322.1 516.3L1323.6 509.6L1324.8 502.9L1325.4 496.5Z" fill="url(#wgG)"/>
<g clip-path="url(#hcG0)"><path d="M1311.5 486.3L1311.3 480.5L1310.6 475.3L1309.5 470.6L1308 466.6L1306 463.3L1303.7 460.9L1301.1 459.2L1298.2 458.4L1295.1 458.5L1291.8 459.5L1288.4 461.3L1285 463.9L1281.5 467.4L1278.1 471.5L1274.8 476.3L1271.7 481.7L1268.8 487.5L1266.2 493.7L1263.9 500.2L1261.9 506.9L1260.4 513.6L1259.3 520.2L1258.6 526.6L1258.4 532.8L1258.6 538.5L1259.3 543.8L1260.4 548.5L1261.9 552.5L1263.9 555.7L1266.2 558.2L1268.8 559.8L1271.7 560.6L1274.8 560.5L1278.1 559.6L1281.5 557.8L1285 555.1L1288.4 551.7L1291.8 547.5L1295.1 542.8L1298.2 537.4L1301.1 531.5L1303.7 525.3L1306 518.8L1308 512.2L1309.5 505.5L1310.6 498.9L1311.3 492.4Z" fill="#ffffff"/><path d="M1311.5 486.3L1311.3 480.5L1310.6 475.3L1309.5 470.6L1308 466.6L1306 463.3L1303.7 460.9L1301.1 459.2L1298.2 458.4L1295.1 458.5L1291.8 459.5L1288.4 461.3L1285 463.9L1281.5 467.4L1278.1 471.5L1274.8 476.3L1271.7 481.7L1268.8 487.5L1266.2 493.7L1263.9 500.2L1261.9 506.9L1260.4 513.6L1259.3 520.2L1258.6 526.6L1258.4 532.8L1258.6 538.5L1259.3 543.8L1260.4 548.5L1261.9 552.5L1263.9 555.7L1266.2 558.2L1268.8 559.8L1271.7 560.6L1274.8 560.5L1278.1 559.6L1281.5 557.8L1285 555.1L1288.4 551.7L1291.8 547.5L1295.1 542.8L1298.2 537.4L1301.1 531.5L1303.7 525.3L1306 518.8L1308 512.2L1309.5 505.5L1310.6 498.9L1311.3 492.4Z" fill="none" stroke="#222222" stroke-width="1.2"/></g>
<path d="M1325.7 490.3L1325.4 484.6L1324.8 479.3L1323.6 474.7L1322.1 470.7L1320.2 467.4L1317.9 464.9L1315.3 463.3L1312.4 462.5L1309.3 462.6L1306 463.5L1302.6 465.4L1299.1 468L1295.6 471.4L1292.2 475.6L1288.9 480.4L1285.8 485.7L1282.9 491.6L1280.3 497.8L1278 504.3L1276.1 510.9L1274.6 517.6L1273.4 524.2L1272.8 530.7L1272.5 536.8L1272.8 542.6L1273.4 547.8L1274.6 552.5L1276.1 556.5L1278 559.8L1280.3 562.3L1282.9 563.9L1285.8 564.7L1288.9 564.6L1292.2 563.6L1295.6 561.8L1299.1 559.2L1302.6 555.8L1306 551.6L1309.3 546.8L1312.4 541.5L1315.3 535.6L1317.9 529.4L1320.2 522.9L1322.1 516.3L1323.6 509.6L1324.8 502.9L1325.4 496.5Z" fill="none" stroke="#222222" stroke-width="1.3"/>
<clipPath id="hcG1"><path d="M1179.1 641.8L1178.9 637.9L1178.5 634.2L1177.7 631L1176.6 628.3L1175.3 626.1L1173.7 624.4L1171.9 623.2L1170 622.7L1167.8 622.7L1165.6 623.4L1163.2 624.7L1160.9 626.5L1158.5 628.8L1156.1 631.7L1153.9 635L1151.7 638.6L1149.8 642.6L1148 646.9L1146.4 651.4L1145.1 655.9L1144 660.5L1143.2 665.1L1142.8 669.5L1142.6 673.7L1142.8 677.6L1143.2 681.2L1144 684.4L1145.1 687.2L1146.4 689.4L1148 691.1L1149.8 692.3L1151.7 692.8L1153.9 692.7L1156.1 692.1L1158.5 690.8L1160.9 689L1163.2 686.7L1165.6 683.8L1167.8 680.5L1170 676.9L1171.9 672.8L1173.7 668.6L1175.3 664.1L1176.6 659.6L1177.7 655L1178.5 650.4L1178.9 646Z"/></clipPath>
<path d="M1179.1 641.8L1178.9 637.9L1178.5 634.2L1177.7 631L1176.6 628.3L1175.3 626.1L1173.7 624.4L1171.9 623.2L1170 622.7L1167.8 622.7L1165.6 623.4L1163.2 624.7L1160.9 626.5L1158.5 628.8L1156.1 631.7L1153.9 635L1151.7 638.6L1149.8 642.6L1148 646.9L1146.4 651.4L1145.1 655.9L1144 660.5L1143.2 665.1L1142.8 669.5L1142.6 673.7L1142.8 677.6L1143.2 681.2L1144 684.4L1145.1 687.2L1146.4 689.4L1148 691.1L1149.8 692.3L1151.7 692.8L1153.9 692.7L1156.1 692.1L1158.5 690.8L1160.9 689L1163.2 686.7L1165.6 683.8L1167.8 680.5L1170 676.9L1171.9 672.8L1173.7 668.6L1175.3 664.1L1176.6 659.6L1177.7 655L1178.5 650.4L1178.9 646Z" fill="url(#wgG)"/>
<clipPath id="hcG1b"><path d="M1164.9 637.7L1164.8 633.8L1164.3 630.2L1163.5 627L1162.5 624.2L1161.2 622L1159.6 620.3L1157.8 619.2L1155.8 618.6L1153.7 618.7L1151.4 619.3L1149.1 620.6L1146.7 622.4L1144.3 624.8L1142 627.6L1139.7 630.9L1137.6 634.6L1135.6 638.6L1133.8 642.8L1132.2 647.3L1130.9 651.9L1129.9 656.4L1129.1 661L1128.6 665.4L1128.5 669.6L1128.6 673.6L1129.1 677.2L1129.9 680.4L1130.9 683.1L1132.2 685.4L1133.8 687.1L1135.6 688.2L1137.6 688.7L1139.7 688.7L1142 688L1144.3 686.8L1146.7 685L1149.1 682.6L1151.4 679.8L1153.7 676.5L1155.8 672.8L1157.8 668.8L1159.6 664.5L1161.2 660.1L1162.5 655.5L1163.5 650.9L1164.3 646.4L1164.8 642Z"/></clipPath>
<g clip-path="url(#hcG1)"><path d="M1164.9 637.7L1164.8 633.8L1164.3 630.2L1163.5 627L1162.5 624.2L1161.2 622L1159.6 620.3L1157.8 619.2L1155.8 618.6L1153.7 618.7L1151.4 619.3L1149.1 620.6L1146.7 622.4L1144.3 624.8L1142 627.6L1139.7 630.9L1137.6 634.6L1135.6 638.6L1133.8 642.8L1132.2 647.3L1130.9 651.9L1129.9 656.4L1129.1 661L1128.6 665.4L1128.5 669.6L1128.6 673.6L1129.1 677.2L1129.9 680.4L1130.9 683.1L1132.2 685.4L1133.8 687.1L1135.6 688.2L1137.6 688.7L1139.7 688.7L1142 688L1144.3 686.8L1146.7 685L1149.1 682.6L1151.4 679.8L1153.7 676.5L1155.8 672.8L1157.8 668.8L1159.6 664.5L1161.2 660.1L1162.5 655.5L1163.5 650.9L1164.3 646.4L1164.8 642Z" fill="#ffffff"/><g clip-path="url(#hcG1b)"><use href="#ocube" y="-0.4"/></g><path d="M1164.9 637.7L1164.8 633.8L1164.3 630.2L1163.5 627L1162.5 624.2L1161.2 622L1159.6 620.3L1157.8 619.2L1155.8 618.6L1153.7 618.7L1151.4 619.3L1149.1 620.6L1146.7 622.4L1144.3 624.8L1142 627.6L1139.7 630.9L1137.6 634.6L1135.6 638.6L1133.8 642.8L1132.2 647.3L1130.9 651.9L1129.9 656.4L1129.1 661L1128.6 665.4L1128.5 669.6L1128.6 673.6L1129.1 677.2L1129.9 680.4L1130.9 683.1L1132.2 685.4L1133.8 687.1L1135.6 688.2L1137.6 688.7L1139.7 688.7L1142 688L1144.3 686.8L1146.7 685L1149.1 682.6L1151.4 679.8L1153.7 676.5L1155.8 672.8L1157.8 668.8L1159.6 664.5L1161.2 660.1L1162.5 655.5L1163.5 650.9L1164.3 646.4L1164.8 642Z" fill="none" stroke="#222222" stroke-width="1.2"/></g>
<path d="M1179.1 641.8L1178.9 637.9L1178.5 634.2L1177.7 631L1176.6 628.3L1175.3 626.1L1173.7 624.4L1171.9 623.2L1170 622.7L1167.8 622.7L1165.6 623.4L1163.2 624.7L1160.9 626.5L1158.5 628.8L1156.1 631.7L1153.9 635L1151.7 638.6L1149.8 642.6L1148 646.9L1146.4 651.4L1145.1 655.9L1144 660.5L1143.2 665.1L1142.8 669.5L1142.6 673.7L1142.8 677.6L1143.2 681.2L1144 684.4L1145.1 687.2L1146.4 689.4L1148 691.1L1149.8 692.3L1151.7 692.8L1153.9 692.7L1156.1 692.1L1158.5 690.8L1160.9 689L1163.2 686.7L1165.6 683.8L1167.8 680.5L1170 676.9L1171.9 672.8L1173.7 668.6L1175.3 664.1L1176.6 659.6L1177.7 655L1178.5 650.4L1178.9 646Z" fill="none" stroke="#222222" stroke-width="1.3"/>
<defs><linearGradient id="gshG" x1="0.3" y1="0" x2="0.6" y2="1"><stop offset="0.15" stop-color="#8f8f8f"/><stop offset="0.85" stop-color="#ffffff"/></linearGradient><g id="shG"><path d="M3.2 -2.8L3 -4.7L2.3 -5.9L1.2 -6.2L0 -5.6L-1.2 -4.1L-2.3 -1.9L-3 0.5L-3.2 2.8L-3 4.7L-2.3 5.9L-1.2 6.2L0 5.6L1.2 4.1L2.3 1.9L3 -0.5Z" fill="url(#gshG)" stroke="#222222" stroke-width="1"/></g></defs>
<use href="#shG" x="1296.5" y="459.9"/>
<use href="#shG" x="1332.1" y="480.3"/>
<use href="#shG" x="1302.9" y="567.3"/>
<use href="#shG" x="1175.6" y="547.5"/>
<use href="#shG" x="1143.4" y="576.4"/>
<use href="#shG" x="1339.5" y="701.4"/>
<use href="#shG" x="1274.9" y="757"/>
<use href="#shG" x="1209.1" y="814"/>
<use href="#shG" x="1143.7" y="871"/>
</g>
<polygon points="726.1,370.9 1180,501.2 1180,557.9 1114.5,615.2 660.6,484.9 660.6,428.2" fill="none" stroke="#f6bc4e" stroke-width="2.5" stroke-linejoin="miter"/>
<circle cx="1082.4" cy="675" r="4.2" fill="#fff" stroke="#111" stroke-width="1.3"/><circle cx="1082.4" cy="675" r="1.6" fill="#111"/>
</g>
<g id="viewcube">
<path d="M1830 92l6.5 9h-13z" fill="#e3e8eb"/>
<path d="M1830 240l6.5-9h-13z" fill="#e3e8eb"/>
<path d="M1756 166l9-6.5v13z" fill="#e3e8eb"/>
<path d="M1904 166l-9-6.5v13z" fill="#e3e8eb"/>
<path d="M1808 104c-11 3-21 9-28 18" fill="none" stroke="#e3e8eb" stroke-width="4.5"/>
<path d="M1776 119.5l8.5 5.5-10 1z" fill="#e3e8eb"/>
<path d="M1852 104c11 3 21 9 28 18" fill="none" stroke="#e3e8eb" stroke-width="4.5"/>
<path d="M1884 119.5l-8.5 5.5 10 1z" fill="#e3e8eb"/>
<polygon points="1793.5,143 1832,125 1868,141 1829.5,161.5" fill="#f3f6f7" stroke="#e3e8eb" stroke-width="5" stroke-linejoin="round"/>
<polygon points="1793.5,143 1829.5,161.5 1832,207.5 1797,186.5" fill="#f7f9fa" stroke="#e3e8eb" stroke-width="5" stroke-linejoin="round"/>
<polygon points="1829.5,161.5 1868,141 1866,183 1832,207.5" fill="#f7f9fa" stroke="#e3e8eb" stroke-width="5" stroke-linejoin="round"/>
<polygon points="1805,143 1831.5,131 1856,141.5 1829.5,154.5" fill="#fdfdfd" stroke="#fdfdfd" stroke-width="3" stroke-linejoin="round"/>
<polygon points="1799.5,153 1824,165.5 1826,196 1802.5,182" fill="#fdfdfd" stroke="#fdfdfd" stroke-width="3" stroke-linejoin="round"/>
<polygon points="1836.5,165 1862,151.5 1860.5,179.5 1838,196" fill="#fdfdfd" stroke="#fdfdfd" stroke-width="3" stroke-linejoin="round"/>
<circle cx="1796" cy="147" r="3.5" fill="#fdfdfd"/>
<circle cx="1829.7" cy="161" r="4.2" fill="#fdfdfd"/>
<circle cx="1866" cy="145" r="3" fill="#fdfdfd"/>
<circle cx="1831.5" cy="203" r="3.5" fill="#fdfdfd"/>
<line x1="1788.3" y1="197.3" x2="1788.3" y2="147" stroke="#3a3ac8" stroke-width="1.3" />
<line x1="1788.3" y1="197.3" x2="1839" y2="212.3" stroke="#d32424" stroke-width="1.3" />
<line x1="1788.3" y1="197.3" x2="1810" y2="180" stroke="#3aa83a" stroke-width="1" />
<line x1="1810" y1="180" x2="1820" y2="172" stroke="#bfe0bf" stroke-width="1" />
<text x="1783.5" y="141.5" font-size="12" fill="#5a5ad8" textLength="8" lengthAdjust="spacingAndGlyphs" font-weight="bold">Z</text>
<text x="1844" y="219.5" font-size="12.5" fill="#d32424" textLength="8.5" lengthAdjust="spacingAndGlyphs" font-weight="bold">X</text>
<text x="1819" y="169.5" font-size="10" fill="#c3e3cf" textLength="6.5" lengthAdjust="spacingAndGlyphs">Y</text>
<g transform="translate(1830.5,140.5) rotate(21) skewX(-25)"><text x="-8.5" y="3" font-size="9" fill="#333" textLength="17" lengthAdjust="spacingAndGlyphs">Top</text></g>
<g transform="translate(1815,179.5) rotate(14)"><text x="-13" y="4" font-size="11.5" fill="#333" textLength="26" lengthAdjust="spacingAndGlyphs">Front</text></g>
<g transform="translate(1856,171) rotate(-58) skewX(-14)"><text x="-10" y="3" font-size="9.5" fill="#333" textLength="20" lengthAdjust="spacingAndGlyphs">Right</text></g>
<g transform="translate(1866.5,222.5)" fill="none" stroke-linejoin="round" stroke-linecap="round"><path d="M8.7 .5l8.3 3.5v10l-8.3 4.5-8.2-4.5v-10z" fill="#fafafa" stroke="#444" stroke-width="1"/><path d="M.5 4l8.2 3.8v10.7l-8.2-4.5z" fill="#9a9a9a" stroke="#444" stroke-width="0.8"/><path d="M8.7 7.8l8.3-3.8v10l-8.3 4.5z" fill="#d5d5d5" stroke="#444" stroke-width="0.8"/></g>
<path d="M1892.5 229.5h7.4l-3.7 4z" fill="#222"/>
</g>
<g id="rightpanel">
<rect x="1888.5" y="433.5" width="32" height="131.7" fill="#fff" stroke="#bdbdbd" stroke-width="1"/>
<line x1="1888.5" y1="466.3" x2="1919" y2="466.3" stroke="#bdbdbd" stroke-width="1" />
<line x1="1888.5" y1="499.2" x2="1919" y2="499.2" stroke="#bdbdbd" stroke-width="1" />
<line x1="1888.5" y1="532.1" x2="1919" y2="532.1" stroke="#bdbdbd" stroke-width="1" />
<rect x="1888.5" y="576.5" width="32" height="98.7" fill="#fff" stroke="#bdbdbd" stroke-width="1"/>
<line x1="1888.5" y1="609.4" x2="1919" y2="609.4" stroke="#bdbdbd" stroke-width="1" />
<line x1="1888.5" y1="642.3" x2="1919" y2="642.3" stroke="#bdbdbd" stroke-width="1" />
<g transform="translate(1895,441)" fill="none" stroke-linejoin="round" stroke-linecap="round"><path d="M2 13l8-12 6 4-6 9z" fill="#6f6f6f"/><path d="M8 8l8-4.5 3.5 5.5-8 5z" fill="#a9a9a9"/><rect x="0.5" y="13" width="19" height="6" fill="#d6d6d6" stroke="#8a8a8a" stroke-width="0.8" rx="1.5"/><rect x="0.5" y="13" width="7" height="6" fill="#fff" stroke="#8a8a8a" stroke-width="0.8" rx="1.5"/><circle cx="3.8" cy="16" r="1.2" fill="#777"/></g>
<g transform="translate(1895.2,474.2)" fill="none" stroke-linejoin="round" stroke-linecap="round"><path d="M11.5 1.8l7.5 3.5v9l-7.5 4.5-7.5-4.5v-9z" fill="#fff" stroke="#222" stroke-width="1.2"/><path d="M4 5.3l7.5 3.7 7.5-3.7M11.5 9v9.8" fill="none" stroke="#222" stroke-width="1.1"/><rect x="0" y="0" width="9.8" height="7.8" fill="#1b5bb5"/><path d="M3.3 0v7.8M6.5 0v7.8M0 2.6h9.8M0 5.2h9.8" fill="none" stroke="#fff" stroke-width="0.8"/></g>
<g transform="translate(1895.2,507.3)" fill="none" stroke-linejoin="round" stroke-linecap="round"><path d="M3 2.5q-1.5 0-1.5 1.5v4q0 1.5-1.2 2 1.2.5 1.2 2v4q0 1.5 1.5 1.5M16.5 2.5q1.5 0 1.5 1.5v4q0 1.5 1.2 2-1.2.5-1.2 2v4q0 1.5-1.5 1.5" fill="none" stroke="#333" stroke-width="1.2"/><path d="M10 5.5l5.5 2.5v5.8l-5.5 3-5.5-3v-5.8zM4.5 8l5.5 2.7 5.5-2.7M10 10.7v6.1" fill="#fff" stroke="#333" stroke-width="1"/><path d="M10 10.7l5.5-2.7v5.8l-5.5 3z" fill="#bbb" stroke="#333" stroke-width="0.8"/><rect x="0" y="0" width="9.8" height="7.8" fill="#222"/><path d="M3.3 0v7.8M6.5 0v7.8M0 2.6h9.8M0 5.2h9.8" fill="none" stroke="#fff" stroke-width="0.8"/></g>
<g transform="translate(1895.2,540.4)" fill="none" stroke-linejoin="round" stroke-linecap="round"><text x="-1" y="17" font-size="17" fill="#111" textLength="5" lengthAdjust="spacingAndGlyphs" font-weight="bold">(</text><text x="4.5" y="16" font-size="18" fill="#111" textLength="10" lengthAdjust="spacingAndGlyphs" font-weight="bold" font-style="italic" style="font-family:'Liberation Serif',serif">x</text><text x="14.5" y="17" font-size="17" fill="#111" textLength="5" lengthAdjust="spacingAndGlyphs" font-weight="bold">)</text><rect x="0" y="0" width="9.8" height="7.8" fill="#222"/><path d="M3.3 0v7.8M6.5 0v7.8M0 2.6h9.8M0 5.2h9.8" fill="none" stroke="#fff" stroke-width="0.8"/></g>
<rect x="1893.5" y="581.5" width="23" height="23" fill="#dcdcdc" rx="4"/>
<g transform="translate(1895.3,582) scale(0.9)"><g transform="translate(0,-47)" fill="none" stroke-linejoin="round" stroke-linecap="round"><g transform="translate(0,47)" fill="none" stroke-linejoin="round" stroke-linecap="round"><path d="M1.5 9.5l16.5-2.5 2 10-16.5 3z" fill="#1f1f1f"/><path d="M0 12.5l1.8-.3.6 3.5-1.8.3zM19 9l1.8-.3.6 3.5-1.8.3z" fill="#1f1f1f"/><circle cx="7.3" cy="13.3" r="2.7" fill="#fff"/><circle cx="13.8" cy="12" r="2.7" fill="#fff"/><circle cx="7.9" cy="13.3" r="1.3" fill="#1f1f1f"/><circle cx="14.4" cy="12" r="1.3" fill="#1f1f1f"/><path d="M8.5 17.8c2 .8 4.5 0 5.5-1.8" fill="none" stroke="#fff" stroke-width="1"/><path d="M10 8v-4M6.5 4l3.5 1.3 3.5-1.3M6 1v4M14 1v4" fill="none" stroke="#555" stroke-width="1.1"/><path d="M8 2h1M11 2h1" fill="none" stroke="#555" stroke-width="1"/></g></g></g>
<circle cx="1902.4" cy="594" r="1.4" fill="#2a7bd0"/><circle cx="1908.3" cy="592.8" r="1.4" fill="#2a7bd0"/>
<rect x="1894" y="614.5" width="22" height="22" fill="#4caf50" rx="1.5"/>
<g transform="translate(1896.5,619)" fill="none" stroke-linejoin="round" stroke-linecap="round"><path d="M0 1.5c3-1.5 6-1.5 8.2.5v11c-2.2-2-5.2-2-8.2-.5zM17 1.5c-3-1.5-6-1.5-8.2.5v11c2.2-2 5.2-2 8.2-.5z" fill="#fff"/></g>
<rect x="1894" y="647.5" width="22" height="22" fill="#1565c0" stroke="#0f2f5a" stroke-width="1.3" rx="1.5"/>
<g transform="translate(1896.5,652)" fill="none" stroke-linejoin="round" stroke-linecap="round"><path d="M0 1.5c3-1.5 6-1.5 8.2.5v11c-2.2-2-5.2-2-8.2-.5zM17 1.5c-3-1.5-6-1.5-8.2.5v11c2.2-2 5.2-2 8.2-.5z" fill="#fff"/></g>
<g transform="translate(1890.5,1030)" fill="none" stroke-linejoin="round" stroke-linecap="round"><path d="M.5 12.5v-3a9.5 9.5 0 0 1 19 0v3z" fill="#fff" stroke="#222" stroke-width="1.2"/><path d="M2.5 11.5v-2a7.5 7.5 0 0 1 15 0v2" fill="none" stroke="#555" stroke-width="0.8"/><path d="M4.5 11c0-3 2.5-5 5.5-5s5.5 2 5.5 5c-1.5-1.3-3-1.8-3.5-1.3-.8 1.5-3.2 1.5-4 0-.5-.5-2 0-3.5 1.3z" fill="#fff" stroke="#222" stroke-width="1.2"/></g>
</g>
<g id="header">
<g transform="translate(5,9)" fill="none" stroke-linejoin="round" stroke-linecap="round"><path d="M9.7 0L19.3 5.5V16.5L9.7 22 0 16.5V5.5z" fill="#60b648"/><path d="M9.7 0L19.3 5.5V16.5L9.7 22z" fill="#57ac41"/><path d="M10 4.8L15 7.8V14L9.7 17.1 4.5 14.2V8z" fill="#f7f7f7" stroke="#fff" stroke-width="1.1"/><path d="M7.2 8.8l2.7-1.6 2.9 1.6v2M12.8 12.8l-3 1.8-2.6-1.5" fill="none" stroke="#5a5a5a" stroke-width="1.3"/><path d="M.3 14.8l4.5-2.6M15.5 7l3.6-2" fill="none" stroke="#f7f7f7" stroke-width="1"/></g>
<text x="31.8" y="24.2" font-size="16" fill="#727272" textLength="67" lengthAdjust="spacingAndGlyphs">onshape</text>
<rect x="113" y="14.2" width="16" height="2.6" fill="#2b2b2b" rx="0.5"/>
<rect x="113" y="20.2" width="16" height="2.6" fill="#2b2b2b" rx="0.5"/>
<rect x="113" y="26.2" width="16" height="2.6" fill="#2b2b2b" rx="0.5"/>
<text x="141" y="29" font-size="22.5" fill="#333" textLength="324.5" lengthAdjust="spacingAndGlyphs" font-weight="bold">1C - Practice Exercise Solutions</text>
<text x="474.5" y="29" font-size="16" fill="#9b9b9b" textLength="155.5" lengthAdjust="spacingAndGlyphs">FRCDesignLib Rework</text>
<g transform="translate(645,14) rotate(-45 7 7.5)" fill="none" stroke-linecap="round"><path d="M5.5 4.5h-2.5a3 3 0 0 0 0 6h2.5M8.5 4.5h2.5a3 3 0 0 1 0 6h-2.5M4.5 7.5h5" fill="none" stroke="#333" stroke-width="1.7"/></g>
<g transform="translate(669,15)" fill="none" stroke-linejoin="round" stroke-linecap="round"><path d="M0.6 12.9 V1.6 Q0.6 0.6 1.6 0.6 H6.4799999999999995 l1.6 2 H16.4 Q17.4 2.6 17.4 3.6 V12.9 z" fill="#fff" stroke="#b5b5b5" stroke-width="1.2"/></g>
<text x="692" y="27" font-size="16" fill="#9b9b9b" textLength="51" lengthAdjust="spacingAndGlyphs">Stage 1</text>
<g transform="translate(796,13)" fill="none" stroke-linejoin="round" stroke-linecap="round"><path d="M8.5 0L17 4 8.5 8 0 4z" fill="#1b5bb5"/><path d="M3.5 6.5v4c1.5 1.6 8.5 1.6 10 0v-4l-5 2.3z" fill="#1b5bb5"/><path d="M1.2 4.8v6.5" fill="none" stroke="#1b5bb5" stroke-width="1.4"/></g>
<circle cx="830.7" cy="20.5" r="8.6" fill="#fff" stroke="#333" stroke-width="1.5"/><g transform="translate(821.7,11.5)" fill="none" stroke-linejoin="round" stroke-linecap="round"><path d="M4 3.5c2-.5 3 .5 4.5.5s1.5 1.5.5 2.5-2.5.5-2.5 2 1.5 1.5 1.5 3-1 2.5-2 2.5-1.5-2-2.5-3.5S1.5 8 2 6.5 3 4 4 3.5zM11 8.5c1-1 3-1 4 0s1.5 3 .5 4.5-2 2.5-3 1.5 0-2-.5-3-2-2-1-3z" fill="#333"/></g>
<g transform="translate(850,12)" fill="none" stroke-linejoin="round" stroke-linecap="round"><path d="M1 0.8h8v2.7h-8z" fill="#fff" stroke="#333" stroke-width="1.4"/><path d="M1 2.5v12.5h5" fill="none" stroke="#333" stroke-width="1.5"/><path d="M6.5 5h7l4 4v7h-11z" fill="#fff" stroke="#333" stroke-width="1.5"/><path d="M13 5v4.5h4.5" fill="none" stroke="#333" stroke-width="1.3"/></g>
<text x="875" y="26" font-size="15.5" fill="#333" textLength="23.5" lengthAdjust="spacingAndGlyphs">392</text>
<rect x="921" y="11" width="2" height="2" fill="#222"/><rect x="921" y="14.3" width="2" height="2" fill="#222"/><rect x="921" y="23.7" width="2" height="2" fill="#222"/><rect x="921" y="27" width="2" height="2" fill="#222"/><circle cx="922" cy="20" r="3.1" fill="#222"/>
<text x="937.5" y="26" font-size="15.5" fill="#333" textLength="31.5" lengthAdjust="spacingAndGlyphs">3388</text>
<g transform="translate(982,11)" fill="none" stroke-linejoin="round" stroke-linecap="round"><path d="M1 8h4v9.5h-4z" fill="#fff" stroke="#333" stroke-width="1.5"/><path d="M5 8.5c2-1 3.5-4 3.5-6.5 0-1.5 3-1.5 3 1 0 2-.8 3.5-.8 4.5h6c1.5 0 2 1.8.8 2.6 1 .8.7 2.2-.4 2.7.8.9.300 2.1-.7 2.4.500 1-.200 2.3-1.7 2.3h-6c-1.5 0-2.5-.800-3.7-.800z" fill="#fff" stroke="#333" stroke-width="1.5"/></g>
<text x="1008" y="26" font-size="15.5" fill="#333" textLength="7.5" lengthAdjust="spacingAndGlyphs">2</text>
<g transform="translate(1515,12)" fill="none" stroke-linejoin="round" stroke-linecap="round"><path d="M5 .8c-2.5 0-2.5 1.2-2.5 3.5v2.5c0 1.7-.800 2.5-2 2.7 1.2.2 2 1 2 2.7v2.5c0 2.3 0 3.5 2.5 3.5M15 .8c2.5 0 2.5 1.2 2.5 3.5v2.5c0 1.7.8 2.5 2 2.7-1.2.2-2 1-2 2.7v2.5c0 2.3 0 3.5-2.5 3.5" fill="none" stroke="#444" stroke-width="1.7"/><path d="M5.8 9.5l3 3 5.5-6" fill="none" stroke="#444" stroke-width="1.9"/></g>
<g transform="translate(1549,14)" fill="none" stroke-linejoin="round" stroke-linecap="round"><path d="M8.5 0c.9 0 1.5.6 1.5 1.5 2.7.8 4 3 4 6v3.5l2.5 3v1h-16v-1l2.5-3v-3.5c0-3 1.3-5.2 4-6 0-.9.6-1.5 1.5-1.5zM6.3 16h4.4a2.2 2.2 0 0 1-4.4 0z" fill="#8a8a8a"/></g>
<rect x="1557" y="7" width="16" height="15" fill="#1b5fc1" rx="2"/>
<text x="1558.5" y="19" font-size="11" fill="#fff" textLength="13" lengthAdjust="spacingAndGlyphs" font-weight="bold">9+</text>
<g transform="translate(1581,13)" fill="none" stroke-linejoin="round" stroke-linecap="round"><rect x="0.8" y="0.8" width="14.4" height="16.4" fill="#fff" stroke="#444" stroke-width="1.6" rx="2.2"/><path d="M3 4.7l1.3 1.3 2.2-2.6M3 9.3l1.3 1.3 2.2-2.6M3 13.9l1.3 1.3 2.2-2.6" fill="none" stroke="#444" stroke-width="1.2"/><path d="M8.5 5.2h4.7M8.5 9.8h4.7M8.5 14.4h4.7" fill="none" stroke="#444" stroke-width="1.6"/></g>
<g transform="translate(1612,13)" fill="none" stroke-linejoin="round" stroke-linecap="round"><rect x="0.8" y="0.8" width="6.4" height="6.4" fill="none" stroke="#444" stroke-width="1.6"/><rect x="0.8" y="10.8" width="6.4" height="6.4" fill="none" stroke="#444" stroke-width="1.6"/><rect x="10.8" y="10.8" width="6.4" height="6.4" fill="none" stroke="#444" stroke-width="1.6"/><path d="M14 0v8.5M9.7 4.2h8.6" fill="none" stroke="#444" stroke-width="1.8"/></g>
<g transform="translate(1645,13)" fill="none" stroke-linejoin="round" stroke-linecap="round"><path d="M8.5 0c5 0 8.5 3.5 8.5 8 0 3-1.5 5-3 6.5v3.5h-8v-3h-2.5c-1 0-1.5-.5-1.5-1.5v-2.5l-2-.8 2-4c0-3.5 2.5-6.2 6.5-6.2z" fill="#5a5a5a"/><circle cx="7.3" cy="7.7" r="2.6" fill="none" stroke="#f7f7f7" stroke-width="1.5" stroke-dasharray="1.3 .9"/><circle cx="11.8" cy="4.5" r="1.7" fill="none" stroke="#f7f7f7" stroke-width="1.2" stroke-dasharray="1 .7"/></g>
<rect x="1673.5" y="3" width="58.5" height="33" fill="#1b5bb5" rx="5"/>
<text x="1685" y="25.5" font-size="16.5" fill="#fff" textLength="36" lengthAdjust="spacingAndGlyphs" font-weight="bold" stroke="#1b5bb5" stroke-width="0.5">Share</text>
<circle cx="1752" cy="21.5" r="9.3" fill="#444"/>
<text x="1747.6" y="27" font-size="15" fill="#fff" textLength="9" lengthAdjust="spacingAndGlyphs" font-weight="bold">?</text>
<path d="M1770 19.5h8l-4 4.3z" fill="#333"/>
<rect x="1789" y="10" width="24" height="24" fill="#0a0a0a" rx="1"/>
<g transform="translate(1789,10)" fill="none" stroke-linejoin="round" stroke-linecap="round"><path d="M12 2.5l8.2 4.7v9.6l-8.2 4.7-8.2-4.7v-9.6z" fill="none" stroke="#19b3b8" stroke-width="1.8"/><path d="M16.5 8l-4.5-2.6-4.5 2.6v3l9 3v3l-4.5 2.6-4.5-2.6" fill="none" stroke="#19b3b8" stroke-width="2"/></g>
<text x="1819" y="26" font-size="16.5" fill="#333" textLength="79" lengthAdjust="spacingAndGlyphs">Andrew Card</text>
<path d="M1907 19h8.4l-4.2 4.5z" fill="#333"/>
</g>
<g id="toolbar">
<line x1="110.5" y1="46" x2="110.5" y2="70" stroke="#cfcfcf" stroke-width="1.3" />
<line x1="199.5" y1="46" x2="199.5" y2="70" stroke="#cfcfcf" stroke-width="1.3" />
<line x1="305.5" y1="46" x2="305.5" y2="70" stroke="#cfcfcf" stroke-width="1.3" />
<line x1="549.5" y1="46" x2="549.5" y2="70" stroke="#cfcfcf" stroke-width="1.3" />
<line x1="639.5" y1="46" x2="639.5" y2="70" stroke="#cfcfcf" stroke-width="1.3" />
<line x1="729.5" y1="46" x2="729.5" y2="70" stroke="#cfcfcf" stroke-width="1.3" />
<line x1="937.5" y1="46" x2="937.5" y2="70" stroke="#cfcfcf" stroke-width="1.3" />
<line x1="1214" y1="46" x2="1214" y2="70" stroke="#cfcfcf" stroke-width="1.3" />
<line x1="1387.7" y1="46" x2="1387.7" y2="70" stroke="#cfcfcf" stroke-width="1.3" />
<line x1="1630" y1="46" x2="1630" y2="70" stroke="#cfcfcf" stroke-width="1.3" />
<line x1="1668" y1="46" x2="1668" y2="70" stroke="#cfcfcf" stroke-width="1.3" />
<g transform="translate(10,49)" fill="none" stroke-linejoin="round" stroke-linecap="round"><circle cx="3.7" cy="4" r="2.9" fill="#fff" stroke="#222" stroke-width="1.7"/><circle cx="3.7" cy="16.3" r="2.1" fill="#222"/><circle cx="11" cy="8.6" r="2" fill="#222"/><path d="M3.7 7v8M3.7 13.5c0-2.5 5.5-1.5 7.3-4.9" fill="none" stroke="#222" stroke-width="1.6"/><path d="M10.5 2.1h9.5M14.8 6.7h5.2M14.8 11.9h5.2M10.5 16.8h9.5" fill="none" stroke="#222" stroke-width="1.9" stroke-linecap="butt"/></g>
<g transform="translate(50,51)" fill="none" stroke-linejoin="round" stroke-linecap="round"><path d="M6.5 .5l-6 5.5 6 5.5v-3.4c4-.2 6.5 1.2 7.5 5.4.7-5.5-2-9.3-7.5-9.7z" fill="#8c8c8c"/></g>
<g transform="translate(99,51) scale(-1,1)"><path d="M6.5 .5l-6 5.5 6 5.5v-3.4c4-.2 6.5 1.2 7.5 5.4.7-5.5-2-9.3-7.5-9.7z" fill="#8c8c8c"/></g>
<g transform="translate(121,49)" fill="none" stroke-linejoin="round" stroke-linecap="round"><path d="M3.5 12.5l8.8-10.3c.9-1 2.3-.6 3 .1.8.8 1 2 .2 2.9l-8.8 10.2-4 1.2z" fill="#fff" stroke="#333" stroke-width="1.4"/><path d="M10.8 4l3.2 2.8" fill="none" stroke="#333" stroke-width="1.2"/><path d="M0 17.7h18" fill="none" stroke="#2a6cc4" stroke-width="1.3"/></g>
<text x="144" y="64" font-size="17" fill="#333" textLength="42" lengthAdjust="spacingAndGlyphs">Sketch</text>
<g transform="translate(209.5,49)" fill="none" stroke-linejoin="round" stroke-linecap="round"><path d="M.7 3q0-2.3 2.3-2.3h11.5l4 3v12q0 2-2 2h-11.8l-4-3z" fill="#fff" stroke="#333" stroke-width="1.2"/><path d="M.7 3l4 3h13.8M4.7 6v11.7" fill="none" stroke="#333" stroke-width="1.1"/><rect x="7.5" y="8.5" width="10.5" height="9" fill="#8e8e8e" stroke="#333" stroke-width="1.1"/><path d="M6.3 7.3l1.2 1.2M6.3 7.3h9M6.3 7.3v8" fill="none" stroke="#555" stroke-width="0.9"/></g>
<g transform="translate(244.5,49)" fill="none" stroke-linejoin="round" stroke-linecap="round"><path d="M14.5 2.8a8.7 8.7 0 1 0 0 13l-4.5-4.3a2.3 2.3 0 0 1 0-4.4z" fill="#8e8e8e" stroke="#333" stroke-width="1.2"/><ellipse cx="12.8" cy="5" rx="2.6" ry="1.5" transform="rotate(-45 12.8 5)" fill="#fff" stroke="#333" stroke-width="1"/><ellipse cx="12.8" cy="13.5" rx="2.6" ry="1.5" transform="rotate(45 12.8 13.5)" fill="#fff" stroke="#333" stroke-width="1"/><path d="M1 9.3h4M7 9.3h10" fill="none" stroke="#333" stroke-width="1" stroke-dasharray="2 1.3"/></g>
<g transform="translate(277,49)" fill="none" stroke-linejoin="round" stroke-linecap="round"><path d="M1.5 15.5c0-6 3.5-7 6.5-7s6-.5 6-5.5l5 .5c0 8-5 9.5-9 9.5s-4 .5-4 2.5c0 3-4.5 3-4.5 0z" fill="#8e8e8e" stroke="#333" stroke-width="1.2"/><ellipse cx="16.5" cy="3" rx="2.7" ry="2.2" fill="#fff" stroke="#333" stroke-width="1.1"/></g>
<g transform="translate(315,49)" fill="none" stroke-linejoin="round" stroke-linecap="round"><path d="M.8 9q0-8.3 8.3-8.3h7l2.5 2v13q0 2-2 2h-13.3l-2.5-2z" fill="#fff" stroke="#333" stroke-width="1.2"/><path d="M.8 9q0-8.3 8.3-8.3l2.5 2q-8.3 0-8.3 8.3z" fill="#8e8e8e" stroke="#333" stroke-width="1"/><path d="M3.3 11v6.7M11.6 2.7h7" fill="none" stroke="#333" stroke-width="1"/></g>
<path d="M345.5 55.9l4.5 4.5 4.5-4.5" fill="none" stroke="#333" stroke-width="2" stroke-linecap="round" stroke-linejoin="round"/>
<g transform="translate(367,49)" fill="none" stroke-linejoin="round" stroke-linecap="round"><path d="M.8 8l7.5-7.3h7.8l2.5 2v13q0 2-2 2h-13.3l-2.5-2z" fill="#fff" stroke="#333" stroke-width="1.2"/><path d="M.8 8l7.5-7.3 2.5 2-7.5 7.3z" fill="#8e8e8e" stroke="#333" stroke-width="1"/><path d="M3.3 10v7.7M10.8 2.7h7.8" fill="none" stroke="#333" stroke-width="1"/></g>
<g transform="translate(402,49)" fill="none" stroke-linejoin="round" stroke-linecap="round"><path d="M.8 .7h15l2.5 2v13q0 2-2 2h-13l-2.5-2z" fill="#fff" stroke="#333" stroke-width="1.2"/><path d="M5.5 3h8.5v11.5h-7v-1.5h-1.5z" fill="#8e8e8e" stroke="#333" stroke-width="0.9"/><path d="M.8 .7l2.5 2h15M3.3 2.7v15" fill="none" stroke="#333" stroke-width="1"/><path d="M7 3v10h5.5v-10" fill="none" stroke="#555" stroke-width="0.8"/></g>
<g transform="translate(436,49)" fill="none" stroke-linejoin="round" stroke-linecap="round"><path d="M.8 .7h15l2.5 2v13q0 2-2 2h-13l-2.5-2z" fill="#fff" stroke="#333" stroke-width="1.2"/><path d="M.8 .7l2.5 2h15M3.3 2.7v15" fill="none" stroke="#333" stroke-width="1"/><circle cx="10.7" cy="10.5" r="5.2" fill="#8e8e8e" stroke="#333" stroke-width="1"/><path d="M7.5 10.5a3.2 3.2 0 0 1 3.2-3.2" fill="none" stroke="#ddd" stroke-width="1.3"/></g>
<g transform="translate(472.5,48.5)" fill="none" stroke-linejoin="round" stroke-linecap="round"><path d="M.6 3v12.5a6 2.4 0 0 0 12 0v-12.5" fill="#fff" stroke="#333" stroke-width="1.1"/><path d="M.6 6v7a6 2.4 0 0 0 12 0v-7a6 2.4 0 0 1-12 0z" fill="#9a9a9a"/><path d="M.8 6.5a6 2 0 0 0 11.6 0" fill="none" stroke="#666" stroke-width="0.8"/><path d="M.8 8.2a6 2 0 0 0 11.6 0" fill="none" stroke="#666" stroke-width="0.8"/><path d="M.8 9.9a6 2 0 0 0 11.6 0" fill="none" stroke="#666" stroke-width="0.8"/><path d="M.8 11.6a6 2 0 0 0 11.6 0" fill="none" stroke="#666" stroke-width="0.8"/><path d="M.8 13.3a6 2 0 0 0 11.6 0" fill="none" stroke="#666" stroke-width="0.8"/><ellipse cx="6.6" cy="3" rx="6" ry="2.4" fill="#fff" stroke="#333" stroke-width="1.1"/><path d="M.6 3v12.5a6 2.4 0 0 0 12 0v-12.5" fill="none" stroke="#333" stroke-width="1.1"/></g>
<g transform="translate(503,49)" fill="none" stroke-linejoin="round" stroke-linecap="round"><path d="M1.2 3.2L5.4 2.6 9.9 .2H15L18.8 4 6.5 7.4z" fill="#fff" stroke="#333" stroke-width="1.1"/><path d="M1.2 3.2V13.9L6.5 17.5V7.4z" fill="#9a9a9a" stroke="#333" stroke-width="1.1"/><path d="M6.5 7.4L18.8 4V14.4L6.5 17.5z" fill="#a6a6a6" stroke="#333" stroke-width="1.1"/><path d="M8.2 7l3.7 5.8 3.9-7.8z" fill="#f2f2f2"/><path d="M12 4.8v5M9.6 9l2.4 3 2.4-3z" fill="#111" stroke="#111" stroke-width="1.7"/></g>
<path d="M533.5 55.9l4.5 4.5 4.5-4.5" fill="none" stroke="#333" stroke-width="2" stroke-linecap="round" stroke-linejoin="round"/>
<g transform="translate(559,49)" fill="none" stroke-linejoin="round" stroke-linecap="round"><rect x="0.7" y="0.7" width="8.5" height="8.5" fill="#fff" stroke="#333" stroke-width="1.2"/><rect x="10.2" y="0.7" width="8.5" height="8.5" fill="#8e8e8e" stroke="#333" stroke-width="1.2"/><rect x="0.7" y="10.2" width="8.5" height="8.5" fill="#8e8e8e" stroke="#333" stroke-width="1.2"/><rect x="10.2" y="10.2" width="8.5" height="8.5" fill="#8e8e8e" stroke="#333" stroke-width="1.2"/></g>
<path d="M589.5 55.9l4.5 4.5 4.5-4.5" fill="none" stroke="#333" stroke-width="2" stroke-linecap="round" stroke-linejoin="round"/>
<g transform="translate(611,49)" fill="none" stroke-linejoin="round" stroke-linecap="round"><path d="M.8 2l2-1.3h3.5l2 3v8.5l-2 2v4h-5.5z" fill="#fff" stroke="#333" stroke-width="1.2"/><path d="M18.5 2l-2-1.3h-3.5v11.5l-2 2v4h7.5z" fill="#8e8e8e" stroke="#333" stroke-width="1.2"/><path d="M6 .7l5 13" fill="none" stroke="#c9c9c9" stroke-width="2"/><path d="M2.8 .7v17M16.5 .7v11" fill="none" stroke="#333" stroke-width="0.8"/></g>
<g transform="translate(649,49.5)" fill="none" stroke-linejoin="round" stroke-linecap="round"><circle cx="6.8" cy="9" r="6.2" fill="#fff" stroke="#333" stroke-width="1.1"/><circle cx="12.8" cy="9" r="6.2" fill="#8e8e8e" stroke="#333" stroke-width="1.1"/><circle cx="6.8" cy="9" r="6.2" fill="none" stroke="#333" stroke-width="1.1"/></g>
<g transform="translate(683,49)" fill="none" stroke-linejoin="round" stroke-linecap="round"><path d="M1.2 9q0-.8.8-.8h8q.8 0 .8.8v8q0 .8-.8.8h-6.5l-2.3-2z" fill="#fff" stroke="#333" stroke-width="1.7"/><path d="M3.3 10.5h7M3.3 10.5v6.5" fill="none" stroke="#555" stroke-width="0.9"/><path d="M13.4 .2l4.6 5.6-4.6 5.8-4.6-5.8z" fill="#8e8e8e" stroke="#444" stroke-width="0.9" stroke-dasharray="1.5 1"/><path d="M3.1 6.5c.5-2.5 1.8-4 3.5-5" fill="none" stroke="#222" stroke-width="1.5"/><path d="M4.3 .1h5.3l-2.3 3.6z" fill="#222"/><path d="M18.4 10.5c-.5 2.5-1.8 4.3-3.5 5.5" fill="none" stroke="#222" stroke-width="1.5"/><path d="M12.4 17.8h5.4l-3.2-3.5z" fill="#222"/></g>
<path d="M713.5 55.9l4.5 4.5 4.5-4.5" fill="none" stroke="#333" stroke-width="2" stroke-linecap="round" stroke-linejoin="round"/>
<g transform="translate(740,49)" fill="none" stroke-linejoin="round" stroke-linecap="round"><path d="M.8 .8l16.5 2.7v14l-16.5-2.7z" fill="#dedede" stroke="#333" stroke-width="1.2"/><path d="M8.5 2v7.5l8.8 1.5" fill="none" stroke="#333" stroke-width="1.2"/></g>
<g transform="translate(773,48.5)" fill="none" stroke-linejoin="round" stroke-linecap="round"><circle cx="9.5" cy="9.5" r="8.8" fill="#fff" stroke="#333" stroke-width="1.2"/><circle cx="9.5" cy="9.5" r="6.4" fill="#fff" stroke="#333" stroke-width="1.2"/><path d="M9.5 3.1v6.4h6.4" fill="none" stroke="#333" stroke-width="1.3"/><path d="M9.5 3.1a6.4 6.4 0 0 1 6.4 6.4h-6.4z" fill="#e3e3e3"/></g>
<g transform="translate(807,48.5)" fill="none" stroke-linejoin="round" stroke-linecap="round"><path d="M1 11.5l4-3h4.5v-5l3.5-2.7h5.5v14l-4 3.2h-13.5z" fill="#fff" stroke="#333" stroke-width="1.2"/><path d="M1 11.5h13.5v6.5M14.5 11.5l4-3.2M9.5 8.5l5 3" fill="none" stroke="#333" stroke-width="1"/><path d="M2 .8c4 0 6 1.5 6.5 5" fill="none" stroke="#111" stroke-width="1.8"/><path d="M5.5 4.5l3.3 3.2 2-4z" fill="#111"/></g>
<text x="840" y="63" font-size="17.5" fill="#222" textLength="5" lengthAdjust="spacingAndGlyphs">(</text><text x="845.5" y="62.7" font-size="20" fill="#222" textLength="11.5" lengthAdjust="spacingAndGlyphs" font-weight="bold" font-style="italic" style="font-family:'Liberation Serif',serif">x</text><text x="857" y="63" font-size="17.5" fill="#222" textLength="5" lengthAdjust="spacingAndGlyphs">)</text>
<text x="874" y="63" font-size="17.5" fill="#222" textLength="5" lengthAdjust="spacingAndGlyphs">(</text><circle cx="883.8" cy="56.3" r="3.3" fill="none" stroke="#222" stroke-width="1.5"/><path d="M886.1 58.8l3.3 3.4" fill="none" stroke="#222" stroke-width="1.7"/><text x="891" y="63" font-size="17.5" fill="#222" textLength="5" lengthAdjust="spacingAndGlyphs">)</text>
<g transform="translate(908,48)" fill="none" stroke-linejoin="round" stroke-linecap="round"><path d="M10.5 0.5l4.8 2.5v5l-4.8 2.7-4.8-2.7v-5z" fill="#fff" stroke="#555" stroke-width="0.9"/><path d="M5.7 3l4.8 2.6 4.8-2.6M10.5 5.6v5.1" fill="none" stroke="#555" stroke-width="0.9"/><path d="M5.3 9l4.8 2.5v5l-4.8 2.7-4.8-2.7v-5z" fill="#fff" stroke="#555" stroke-width="0.9"/><path d="M0.5 11.5l4.8 2.6 4.8-2.6M5.3 14.1v5.1" fill="none" stroke="#555" stroke-width="0.9"/><path d="M15.8 9l4.8 2.5v5l-4.8 2.7-4.8-2.7v-5z" fill="#fff" stroke="#555" stroke-width="0.9"/><path d="M11 11.5l4.8 2.6 4.8-2.6M15.8 14.1v5.1" fill="none" stroke="#555" stroke-width="0.9"/></g>
<g transform="translate(948,49)" fill="none" stroke-linejoin="round" stroke-linecap="round"><path d="M9 .7l8.3 4.5v9l-8.3 4.7-8.3-4.7v-9z" fill="#f2f2f2" stroke="#222" stroke-width="1.4"/><path d="M9 9.8l8.3-4.6v9l-8.3 4.7z" fill="#cfcfcf"/><path d="M.7 5.2l8.3 4.6 8.3-4.6M9 9.8v9.1" fill="none" stroke="#222" stroke-width="1.2"/><path d="M9 .7l8.3 4.5v9l-8.3 4.7-8.3-4.7v-9z" fill="none" stroke="#222" stroke-width="1.4"/></g>
<g transform="translate(981,47)" fill="none" stroke-linejoin="round" stroke-linecap="round"><path d="M1.5 9.5l16.5-2.5 2 10-16.5 3z" fill="#2b2b2b"/><path d="M0 12.5l1.8-.3.6 3.5-1.8.3zM19 9l1.8-.3.6 3.5-1.8.3z" fill="#2b2b2b"/><circle cx="7.3" cy="13.3" r="2.7" fill="#fff"/><circle cx="13.8" cy="12" r="2.7" fill="#fff"/><circle cx="7.9" cy="13.3" r="1.3" fill="#2b2b2b"/><circle cx="14.4" cy="12" r="1.3" fill="#2b2b2b"/><path d="M8.5 17.8c2 .8 4.5 0 5.5-1.8" fill="none" stroke="#fff" stroke-width="1"/><path d="M10 8v-4M6.5 4l3.5 1.3 3.5-1.3M6 1v4M14 1v4" fill="none" stroke="#555" stroke-width="1.1"/><path d="M8 2h1M11 2h1" fill="none" stroke="#555" stroke-width="1"/></g>
<g transform="translate(1015,48.5)" fill="none" stroke-linejoin="round" stroke-linecap="round"><circle cx="6" cy="6" r="4.5" fill="#fff" stroke="#c9c9c9" stroke-width="1.2"/><circle cx="15" cy="15.5" r="3" fill="#fff" stroke="#c9c9c9" stroke-width="1.2"/><path d="M2 9l10.5 8.5M10 3.5l8 10.5" fill="none" stroke="#c9c9c9" stroke-width="1.2"/></g>
<g transform="translate(1048,47)" fill="none" stroke-linejoin="round" stroke-linecap="round"><path d="M1.5 9.5l16.5-2.5 2 10-16.5 3z" fill="#2b2b2b"/><path d="M0 12.5l1.8-.3.6 3.5-1.8.3zM19 9l1.8-.3.6 3.5-1.8.3z" fill="#2b2b2b"/><circle cx="7.3" cy="13.3" r="2.7" fill="#fff"/><circle cx="13.8" cy="12" r="2.7" fill="#fff"/><circle cx="7.9" cy="13.3" r="1.3" fill="#2b2b2b"/><circle cx="14.4" cy="12" r="1.3" fill="#2b2b2b"/><path d="M8.5 17.8c2 .8 4.5 0 5.5-1.8" fill="none" stroke="#fff" stroke-width="1"/><path d="M10 8v-4M6.5 4l3.5 1.3 3.5-1.3M6 1v4M14 1v4" fill="none" stroke="#555" stroke-width="1.1"/><path d="M8 2h1M11 2h1" fill="none" stroke="#555" stroke-width="1"/></g>
<g transform="translate(1084,49)" fill="none" stroke-linejoin="round" stroke-linecap="round"><path d="M.7 .7h14.5l2.5 2.5v15h-14.5l-2.5-2.5z" fill="#bbb" stroke="#888" stroke-width="1"/><rect x="3.2" y="3.2" width="7.3" height="7.5" fill="#8d8d8d"/><rect x="10.5" y="3.2" width="7.2" height="7.5" fill="#9d9d9d"/><rect x="3.2" y="10.7" width="7.3" height="7.5" fill="#9a9a9a"/><rect x="10.5" y="10.7" width="7.2" height="7.5" fill="#777"/></g>
<g transform="translate(1116,48)" fill="none" stroke-linejoin="round" stroke-linecap="round"><circle cx="10.5" cy="11" r="5.5" fill="none" stroke="#4a4a4a" stroke-width="3.4"/><path d="M.5 18.5h20v2.8h-20zM4 17l2.5-2.5M17 17l-2.5-2.5M2 1l5 5M19 1l-5 5M.5 2.5l3.5-2.5M20.5 2.5l-3.5-2.5" fill="none" stroke="#4a4a4a" stroke-width="2.3"/><rect x="0.5" y="18.5" width="20" height="2.8" fill="#4a4a4a"/></g>
<g transform="translate(1150,47.5)" fill="none" stroke-linejoin="round" stroke-linecap="round"><path d="M20.1 8.6L20.1 12.4L17.4 12.8L17 13.8L18.7 15.9L15.9 18.7L13.8 17L12.8 17.4L12.4 20.1L8.6 20.1L8.2 17.4L7.2 17L5.1 18.7L2.3 15.9L4 13.8L3.6 12.8L0.9 12.4L0.9 8.6L3.6 8.2L4 7.2L2.3 5.1L5.1 2.3L7.2 4L8.2 3.6L8.6 0.9L12.4 0.9L12.8 3.6L13.8 4L15.9 2.3L18.7 5.1L17 7.2L17.4 8.2Z" fill="#8a8a8a" stroke="#222" stroke-width="1.5"/><circle cx="10.5" cy="10.5" r="3.3" fill="#fff" stroke="#222" stroke-width="1.5"/></g>
<g transform="translate(1188.5,50)" fill="none" stroke-linejoin="round" stroke-linecap="round"><path d="M.5 .5h12.5l-4.7 7v4h-3.1v-4z" fill="#9a9a9a" stroke="#777" stroke-width="0.8"/><path d="M.5 12.5h12.5M.5 15.5h12.5" fill="none" stroke="#8a8a8a" stroke-width="2"/></g>
<g transform="translate(1222,47)" fill="none" stroke-linejoin="round" stroke-linecap="round"><path d="M1.5 10.5l8.5-8.5 8 8.5-8 8.5z" fill="#fff" stroke="#333" stroke-width="1.4"/><path d="M2.5 11.5h15l-7.5 7.5z" fill="#3a3a3a"/><path d="M4.5 .8l8.5 9M7.5 .8l7 7.5" fill="none" stroke="#333" stroke-width="1.2"/><path d="M18 10.5c2 1.5 3 4 2.8 6.5-.2 1.5-2.3 1.5-2.3 0 0-2 .3-4-.5-6.5z" fill="#3a3a3a"/></g>
<rect x="1257.5" y="48.5" width="19" height="19" fill="#fff" stroke="#9a9a9a" stroke-width="1" rx="3"/><text x="1259.7" y="63.3" font-size="13" fill="#333" textLength="14.6" lengthAdjust="spacingAndGlyphs">SM</text>
<g transform="translate(1290,49)" fill="none" stroke-linejoin="round" stroke-linecap="round"><path d="M.8 4l17.5-2.8q1.5-.2 1.7 1.3l1.5 10.5q.2 1.5-1.3 1.7l-16.2 2.5q-1.5.2-1.7-1.3l-1.8-10.2q-.2-1.5.3-1.7z" fill="#fff" stroke="#333" stroke-width="1.5"/><path d="M1 4.2l18-3 .8 4-18 3z" fill="#333"/><path d="M4.5 4.8l12-2" fill="none" stroke="#fff" stroke-width="1" stroke-dasharray="1.5 .8"/></g>
<rect x="1325.5" y="48.5" width="19" height="19" fill="#fff" stroke="#9a9a9a" stroke-width="1" rx="3"/><text x="1327.7" y="63.3" font-size="13" fill="#333" textLength="14.6" lengthAdjust="spacingAndGlyphs">Ai</text>
<rect x="1359.5" y="48.5" width="19" height="19" fill="#fff" stroke="#9a9a9a" stroke-width="1" rx="3"/><text x="1361.7" y="63.3" font-size="13" fill="#333" textLength="14.6" lengthAdjust="spacingAndGlyphs">Ds</text>
<g transform="translate(1397,49)" fill="none" stroke-linejoin="round" stroke-linecap="round"><path d="M.8 2q2-1.5 4.5-1.5v9q0 2.5 2.5 2.5 2.5 0 2.5-2.5v-9q3 0 5.5 2v10.5q-1.5 5-6 5h-4.5q-4.5-1-4.5-5.5z" fill="#fff" stroke="#333" stroke-width="1.2"/><path d="M5.3 9.5q0 2.5 2.5 2.5 2.5 0 2.5-2.5l5.5 3.5q-1.5 5-6 5h-4.5z" fill="#c9c9c9" stroke="#333" stroke-width="0.9"/><path d="M10.3 .5v9l5.5 3.5v-10.5q-2.5-2-5.5-2z" fill="#8e8e8e" stroke="#333" stroke-width="0.9"/></g>
<g transform="translate(1432,49)" fill="none" stroke-linejoin="round" stroke-linecap="round"><path d="M12 .8l5.5 3v11q0 3-3 3l-13.5-.3 5-4.5h6z" fill="#8e8e8e" stroke="#333" stroke-width="1.1"/><path d="M1 17.5l5-4.5h6l-2.5 4.8z" fill="#d9d9d9" stroke="#333" stroke-width="1"/><path d="M12 .8v12.2" fill="none" stroke="#333" stroke-width="1"/></g>
<g transform="translate(1465,50)" fill="none" stroke-linejoin="round" stroke-linecap="round"><path d="M.8 9l10 0 5.5-6.5 3.5 3-6 7h-8z" fill="#8e8e8e" stroke="#333" stroke-width="1"/><path d="M.8 9l4.5 4.5h8.5l-3-4.5z" fill="#e1e1e1" stroke="#333" stroke-width="1"/><path d="M5 1l11 14" fill="none" stroke="#333" stroke-width="1.1"/></g>
<g transform="translate(1500,49)" fill="none" stroke-linejoin="round" stroke-linecap="round"><path d="M3 .8h16v17.4h-18.2v-8h4.5v-3q-3-.5-3-3.5 0-2.5.7-2.9z" fill="#d9d9d9" stroke="#333" stroke-width="1.3"/><path d="M3 .8h7v9.5h-4.7v-3q-3-.5-3-3.5 0-2.5.7-3zM.8 10.2h7.5v8h-7.5z" fill="#8e8e8e" stroke="#333" stroke-width="1"/></g>
<g transform="translate(1533,49)" fill="none" stroke-linejoin="round" stroke-linecap="round"><path d="M.8 18.5v-9.5q0-8.2 8.2-8.2h10.5" fill="none" stroke="#333" stroke-width="1.5"/><path d="M2 18.5v-9q0-7.5 7.5-7.5h10v16.5z" fill="#e9e9e9"/><path d="M.8 9l8.2-8.2h-8.2z" fill="#8e8e8e"/></g>
<g transform="translate(1567,48)" fill="none" stroke-linejoin="round" stroke-linecap="round"><path d="M.8 4.5q2.5-2 5.5-2h5v12.5q0 4-4 4h-2q-4.5-1-4.5-5.5z" fill="#fff" stroke="#333" stroke-width="1.2"/><path d="M5.5 3v7.5h8M13.5 10.5l5 6.5" fill="none" stroke="#333" stroke-width="1.1"/><path d="M13.5 10.5l5 6.5v-9z" fill="#b5b5b5" stroke="#333" stroke-width="0.9"/><path d="M10.5 4.5l3 3.2 6-7" fill="none" stroke="#111" stroke-width="2.3"/></g>
<g transform="translate(1602,49.5)" fill="none" stroke-linejoin="round" stroke-linecap="round"><path d="M.5 .8h15.5q3.5 0 3.5 3.5v13M19.5 12h-3.5M16 12v5.5" fill="none" stroke="#333" stroke-width="1.4"/><path d="M16 9.5h-6q-3 0-3-2.5 0-2.5 3-2.5h9.5" fill="none" stroke="#333" stroke-width="1.4"/></g>
<rect x="1639.7" y="48.2" width="19" height="19.5" fill="none" stroke="#222" stroke-width="1.4" rx="3.5" stroke-dasharray="4 2.6"/><path d="M1649.2 52.5v11M1643.7 58h11" fill="none" stroke="#111" stroke-width="2"/>
<g transform="translate(1678,49)" fill="none" stroke-linejoin="round" stroke-linecap="round"><path d="M3.5 .8q-2 0-2 2v4q0 2-1.3 2.5 1.3.5 1.3 2.5v4q0 2 2 2M15.5 .8q2 0 2 2v4q0 2 1.3 2.5-1.3.5-1.3 2.5v4q0 2-2 2" fill="none" stroke="#333" stroke-width="1.3"/><path d="M9.5 4.5l5 2.5v5.5l-5 3-5-3v-5.5zM4.5 7l5 2.8 5-2.8M9.5 9.8v5.7" fill="none" stroke="#333" stroke-width="1.1"/><circle cx="13.5" cy="2.5" r="2.2" fill="#222"/><path d="M13.5 4v4" fill="none" stroke="#222" stroke-width="1.3"/></g>
<path d="M1702 55.9l4.5 4.5 4.5-4.5" fill="none" stroke="#333" stroke-width="2" stroke-linecap="round" stroke-linejoin="round"/>
<rect x="1734" y="42.5" width="160.5" height="31.5" fill="#f0f0f0" rx="4"/>
<text x="1742.5" y="63.5" font-size="16" fill="#333" textLength="86.5" lengthAdjust="spacingAndGlyphs">Search tools...</text>
<rect x="1833.5" y="49.5" width="33.5" height="18.5" fill="#fafafa" stroke="#b8b8b8" stroke-width="1" rx="2"/>
<text x="1836.5" y="63.3" font-size="12.5" fill="#333" textLength="27" lengthAdjust="spacingAndGlyphs">alt/⌥</text>
<rect x="1868" y="49.5" width="16" height="18.5" fill="#fafafa" stroke="#b8b8b8" stroke-width="1" rx="2"/>
<text x="1872.7" y="63.3" font-size="12.5" fill="#333" textLength="6.5" lengthAdjust="spacingAndGlyphs">c</text>
</g>
<g id="leftstrip">
<g transform="translate(10,84)" fill="none" stroke-linejoin="round" stroke-linecap="round"><rect x="5.3" y="0" width="2" height="2" fill="#222"/><rect x="5.3" y="3.2" width="2" height="2" fill="#222"/><rect x="5.3" y="12.4" width="2" height="2" fill="#222"/><rect x="5.3" y="15.6" width="2" height="2" fill="#222"/><circle cx="6.3" cy="8.7" r="3.1" fill="#2b2b2b"/><path d="M14.5 10.5v7.5M10.8 14.2h7.5" fill="none" stroke="#1b5bb5" stroke-width="2"/></g>
<g transform="translate(10,119)" fill="none" stroke-linejoin="round" stroke-linecap="round"><ellipse cx="10" cy="7.5" rx="9.8" ry="7.3" fill="#2b2b2b"/><path d="M4.5 12.5c0 2.5-1.5 4.5-3.5 5.5 3.5 0 6.5-1.5 8-4z" fill="#2b2b2b"/></g>
<g transform="translate(11,154)" fill="none" stroke-linejoin="round" stroke-linecap="round"><path d="M12.5 9.5v6q0 1.7-1.7 1.7h-8.3q-1.7 0-1.7-1.7v-12.8q0-1.7 1.7-1.7h8.3q1.7 0 1.7 1.7" fill="#fff" stroke="#222" stroke-width="1.7"/><path d="M3.5 5h6M3.5 8.2h5M3.5 11.4h2.5" fill="none" stroke="#222" stroke-width="1.5"/><path d="M7.5 13.5l.8-3 6-6.5 2.3 2.2-6 6.5z" fill="#222"/></g>
<g transform="translate(10,188)" fill="none" stroke-linejoin="round" stroke-linecap="round"><circle cx="11.5" cy="11" r="6.8" fill="#fff" stroke="#222" stroke-width="2"/><path d="M9 1h5M11.5 1v3M11.5 11l3-3.5" fill="none" stroke="#222" stroke-width="1.7"/><path d="M17 4l1.5 1.5" fill="none" stroke="#222" stroke-width="1.7"/><path d="M1.5 8h4M.5 11h4M2 14h3" fill="none" stroke="#222" stroke-width="1.4"/></g>
<g transform="translate(12,225)" fill="none" stroke-linejoin="round" stroke-linecap="round"><rect x="0.8" y="0.8" width="14.4" height="16.4" fill="#fff" stroke="#222" stroke-width="1.6" rx="2.2"/><path d="M3 4.7l1.3 1.3 2.2-2.6M3 9.3l1.3 1.3 2.2-2.6M3 13.9l1.3 1.3 2.2-2.6" fill="none" stroke="#222" stroke-width="1.2"/><path d="M8.5 5.2h4.7M8.5 9.8h4.7M8.5 14.4h4.7" fill="none" stroke="#222" stroke-width="1.6"/></g>
<g transform="translate(10,1057)" fill="none" stroke-linejoin="round" stroke-linecap="round"><path d="M0 0h16.5v5.5a6.5 6.5 0 0 0-10 5.5h-6.5z" fill="#222"/><circle cx="11.5" cy="11" r="4.3" fill="#fff" stroke="#222" stroke-width="1.9"/><path d="M14.7 14.3l3.8 3.7" fill="none" stroke="#222" stroke-width="2.3"/></g>
</g>
<g id="features">
<rect x="40" y="76" width="205.5" height="973" fill="#ffffff"/>
<line x1="40" y1="76.5" x2="245.5" y2="76.5" stroke="#cfcfcf" stroke-width="1" />
<line x1="245.5" y1="76" x2="245.5" y2="1049" stroke="#cfcfcf" stroke-width="1" />
<g transform="translate(50,92)" fill="none" stroke-linejoin="round" stroke-linecap="round"><path d="M.8 .8h14.4l-5.7 7v7.2l-3-2v-5.2z" fill="#fff" stroke="#222" stroke-width="1.4"/></g>
<rect x="79.5" y="84.5" width="156.5" height="29" fill="#fff" stroke="#b9b9b9" stroke-width="1" rx="3"/>
<text x="86" y="104.5" font-size="13.5" fill="#9a9a9a" textLength="123" lengthAdjust="spacingAndGlyphs" font-style="italic">Filter by name or type</text>
<text x="44" y="135" font-size="14.5" fill="#2d2d2d" textLength="80" lengthAdjust="spacingAndGlyphs" stroke="#2d2d2d" stroke-width="0.35">Features (20)</text>
<g transform="translate(145,122)" fill="none" stroke-linejoin="round" stroke-linecap="round"><path d="M1 14.4v-12.8h6.5l1.5 2h9.5v10.8h-10" fill="none" stroke="#b9bcc6" stroke-width="1.2"/><path d="M1 10.5v3.9h3" fill="none" stroke="#b9bcc6" stroke-width="1" stroke-dasharray="1.5 1.5"/><path d="M5.5 6v7M2 9.5h7" fill="none" stroke="#8fa2d8" stroke-width="1.5"/></g>
<rect x="179" y="123" width="4" height="13.5" fill="#9a9a9a"/>
<rect x="187" y="123" width="4" height="13.5" fill="#9a9a9a"/>
<g transform="translate(206,121)" fill="none" stroke-linejoin="round" stroke-linecap="round"><circle cx="8" cy="10" r="6.7" fill="#fff" stroke="#222" stroke-width="1.8"/><path d="M5.5 .9h5M8 .9v2.5M8 10l3 3.5M13.5 3l1.7 1.5" fill="none" stroke="#222" stroke-width="1.6"/></g>
<rect x="59" y="300.5" width="181" height="25" fill="#f3f3f3"/>
<rect x="40" y="483" width="200" height="23" fill="#e9eef1"/>
<line x1="40" y1="506.5" x2="240" y2="506.5" stroke="#9fd0ee" stroke-width="1" />
<rect x="40" y="509" width="200" height="23.3" fill="#eef1f3"/>
<line x1="40" y1="532.5" x2="240" y2="532.5" stroke="#9fd0ee" stroke-width="1" />
<rect x="40" y="535.5" width="200" height="23.3" fill="#b5daf3"/>
<line x1="49.5" y1="171" x2="49.5" y2="273.5" stroke="#c9c9c9" stroke-width="1" />
<line x1="45" y1="273.5" x2="54" y2="273.5" stroke="#c9c9c9" stroke-width="1" />
<line x1="49.5" y1="300" x2="49.5" y2="325.5" stroke="#c9c9c9" stroke-width="1" />
<line x1="45" y1="325.5" x2="54" y2="325.5" stroke="#c9c9c9" stroke-width="1" />
<line x1="49.5" y1="404" x2="49.5" y2="481.5" stroke="#c9c9c9" stroke-width="1" />
<line x1="45" y1="481.5" x2="54" y2="481.5" stroke="#c9c9c9" stroke-width="1" />
<line x1="49.5" y1="508" x2="49.5" y2="559.5" stroke="#c9c9c9" stroke-width="1" />
<line x1="45" y1="559.5" x2="54" y2="559.5" stroke="#c9c9c9" stroke-width="1" />
<path d="M45.5 154.2l5 5 5-5" fill="none" stroke="#333" stroke-width="2" stroke-linejoin="round"/>
<text x="63" y="161.8" font-size="14" fill="#2d2d2d" textLength="102" lengthAdjust="spacingAndGlyphs">Default geometry</text>
<circle cx="72" cy="183" r="3.3" fill="#fff" stroke="#444" stroke-width="1"/><circle cx="72" cy="183" r="1.4" fill="#444"/>
<text x="85" y="187.8" font-size="14" fill="#2d2d2d" textLength="34.5" lengthAdjust="spacingAndGlyphs">Origin</text>
<g transform="translate(65,201)" fill="none" stroke-linejoin="round" stroke-linecap="round"><path d="M.6 .6l14 2.3v12.5l-14-2.3z" fill="#ececec" stroke="#b5b5b5" stroke-width="1.2"/><path d="M7 1.7v6.4l7.6 1.2" fill="none" stroke="#b5b5b5" stroke-width="1.2"/></g>
<text x="85" y="213.8" font-size="14" fill="#a3a3a3" textLength="22" lengthAdjust="spacingAndGlyphs">Top</text>
<g transform="translate(65,227)" fill="none" stroke-linejoin="round" stroke-linecap="round"><path d="M.6 .6l14 2.3v12.5l-14-2.3z" fill="#ececec" stroke="#b5b5b5" stroke-width="1.2"/><path d="M7 1.7v6.4l7.6 1.2" fill="none" stroke="#b5b5b5" stroke-width="1.2"/></g>
<text x="85" y="239.8" font-size="14" fill="#a3a3a3" textLength="32" lengthAdjust="spacingAndGlyphs">Front</text>
<g transform="translate(65,253)" fill="none" stroke-linejoin="round" stroke-linecap="round"><path d="M.6 .6l14 2.3v12.5l-14-2.3z" fill="#ececec" stroke="#b5b5b5" stroke-width="1.2"/><path d="M7 1.7v6.4l7.6 1.2" fill="none" stroke="#b5b5b5" stroke-width="1.2"/></g>
<text x="85" y="265.8" font-size="14" fill="#a3a3a3" textLength="31" lengthAdjust="spacingAndGlyphs">Right</text>
<path d="M45.5 284.2l5 5 5-5" fill="none" stroke="#333" stroke-width="2" stroke-linejoin="round"/>
<g transform="translate(66,279)" fill="none" stroke-linejoin="round" stroke-linecap="round"><path d="M7.5 .6l6.5 3.5v7.6l-6.5 3.7-6.5-3.7v-7.6z" fill="#fff" stroke="#444" stroke-width="1.3"/><path d="M1 4.1l6.5 3.6 6.5-3.6M7.5 7.7v7.7" fill="none" stroke="#444" stroke-width="1.3"/></g>
<text x="86" y="291.8" font-size="14" fill="#2d2d2d" textLength="68" lengthAdjust="spacingAndGlyphs">Origin Cube</text>
<rect x="199" y="277" width="2" height="2" fill="#222"/><rect x="199" y="280.3" width="2" height="2" fill="#222"/><rect x="199" y="289.7" width="2" height="2" fill="#222"/><rect x="199" y="293" width="2" height="2" fill="#222"/><circle cx="200" cy="286" r="3.1" fill="#222"/>
<g transform="translate(65,305)" fill="none" stroke-linejoin="round" stroke-linecap="round"><circle cx="8" cy="8" r="7.3" fill="#fff" stroke="#aaa" stroke-width="1.1"/><circle cx="8" cy="8" r="5.3" fill="none" stroke="#aaa" stroke-width="1.1"/><path d="M8 2.7v5.3h5.3" fill="none" stroke="#aaa" stroke-width="1.1"/></g>
<text x="85" y="317.8" font-size="14" fill="#a3a3a3" textLength="101" lengthAdjust="spacingAndGlyphs">Mate connector 1</text>
<g transform="translate(46,331)" fill="none" stroke-linejoin="round" stroke-linecap="round"><path d="M3 10.5l7.4-8.6c.7-.8 1.9-.5 2.5.1.7.7.8 1.7.1 2.4l-7.4 8.6-3.3 1z" fill="#fff" stroke="#aaa" stroke-width="1.2"/><path d="M0 15h15" fill="none" stroke="#9db8e0" stroke-width="1.1"/></g>
<text x="66" y="343.8" font-size="14" fill="#a3a3a3" textLength="83" lengthAdjust="spacingAndGlyphs">Layout Sketch</text>
<path d="M47 360l5 5-5 5" fill="none" stroke="#333" stroke-width="2" stroke-linejoin="round"/>
<g transform="translate(65.5,358)" fill="none" stroke-linejoin="round" stroke-linecap="round"><path d="M0.6 11.4 V1.6 Q0.6 0.6 1.6 0.6 H5.58 l1.6 2 H13.9 Q14.9 2.6 14.9 3.6 V11.4 z" fill="#fff" stroke="#666" stroke-width="1"/></g>
<text x="86" y="369.8" font-size="14" fill="#2d2d2d" textLength="48" lengthAdjust="spacingAndGlyphs">Tube (3)</text>
<path d="M45.5 388.2l5 5 5-5" fill="none" stroke="#333" stroke-width="2" stroke-linejoin="round"/>
<g transform="translate(65.5,384)" fill="none" stroke-linejoin="round" stroke-linecap="round"><path d="M0.6 11.4 V1.6 Q0.6 0.6 1.6 0.6 H5.58 l1.6 2 H13.9 Q14.9 2.6 14.9 3.6 V11.4 z" fill="#fff" stroke="#666" stroke-width="1"/></g>
<text x="86" y="395.8" font-size="14" fill="#2d2d2d" textLength="48.5" lengthAdjust="spacingAndGlyphs">Plate (3)</text>
<g transform="translate(65,409)" fill="none" stroke-linejoin="round" stroke-linecap="round"><path d="M3 10.5l7.4-8.6c.7-.8 1.9-.5 2.5.1.7.7.8 1.7.1 2.4l-7.4 8.6-3.3 1z" fill="#fff" stroke="#aaa" stroke-width="1.2"/><path d="M0 15h15" fill="none" stroke="#9db8e0" stroke-width="1.1"/></g>
<text x="85" y="421.8" font-size="14" fill="#a3a3a3" textLength="73.5" lengthAdjust="spacingAndGlyphs">Plate Sketch</text>
<g transform="translate(65,435)" fill="none" stroke-linejoin="round" stroke-linecap="round"><path d="M.6 2.5q0-1.9 1.9-1.9h9.5l3 2.4v10.5q0 1.5-1.5 1.5h-9.9l-3-2.4z" fill="#fff" stroke="#333" stroke-width="1.1"/><path d="M.6 2.5l3 2.4h11.4M3.6 4.9v10.1" fill="none" stroke="#333" stroke-width="1"/><rect x="6" y="7" width="8.4" height="7.6" fill="#8a8a8a" stroke="#333" stroke-width="1"/></g>
<text x="85" y="447.8" font-size="14" fill="#2d2d2d" textLength="79" lengthAdjust="spacingAndGlyphs">Plate Extrude</text>
<g transform="translate(65,461)" fill="none" stroke-linejoin="round" stroke-linecap="round"><path d="M.6 1.5l2-1h2.5l2 2.5v7l-2 1.5v3.5h-4.5z" fill="#fff" stroke="#333" stroke-width="1.1"/><path d="M15 1.5l-2-1h-2.5v10l-1.5 1.5v3h6z" fill="#8a8a8a" stroke="#333" stroke-width="1.1"/><path d="M5 .8l3.5 10" fill="none" stroke="#bbb" stroke-width="1.3"/></g>
<text x="85" y="473.8" font-size="14" fill="#2d2d2d" textLength="70" lengthAdjust="spacingAndGlyphs">Plate Mirror</text>
<path d="M45.5 492.2l5 5 5-5" fill="none" stroke="#333" stroke-width="2" stroke-linejoin="round"/>
<g transform="translate(65.5,488)" fill="none" stroke-linejoin="round" stroke-linecap="round"><path d="M0.6 11.4 V1.6 Q0.6 0.6 1.6 0.6 H5.58 l1.6 2 H13.9 Q14.9 2.6 14.9 3.6 V11.4 z" fill="#fff" stroke="#666" stroke-width="1"/></g>
<text x="86" y="499.8" font-size="14" fill="#2d2d2d" textLength="71" lengthAdjust="spacingAndGlyphs">2x1 Tube (2)</text>
<g transform="translate(65,513)" fill="none" stroke-linejoin="round" stroke-linecap="round"><path d="M.6 2.5q0-1.9 1.9-1.9h9.5l3 2.4v10.5q0 1.5-1.5 1.5h-9.9l-3-2.4z" fill="#fff" stroke="#333" stroke-width="1.1"/><path d="M.6 2.5l3 2.4h11.4M3.6 4.9v10.1" fill="none" stroke="#333" stroke-width="1"/><rect x="6" y="7" width="8.4" height="7.6" fill="#8a8a8a" stroke="#333" stroke-width="1"/></g>
<text x="85" y="525.8" font-size="14" fill="#2d2d2d" textLength="102" lengthAdjust="spacingAndGlyphs">2x1 Tube Extrude</text>
<g transform="translate(64.5,538)" fill="none" stroke-linejoin="round" stroke-linecap="round"><path d="M.8 1.8l9-1.3 5.7 2.8v12l-5.7 2.2-9-3.2z" fill="#f2f5f7" stroke="#24343f" stroke-width="1.1"/><path d="M9.8 .6l5.6 2.8v11.8l-5.3 2z" fill="#9aa4aa" stroke="#24343f" stroke-width="0.9"/><ellipse cx="3.4" cy="5" rx="1.5" ry="2" fill="#2b4152"/><ellipse cx="7.4" cy="5.5" rx="1.5" ry="2" fill="#2b4152"/><ellipse cx="3.4" cy="12.2" rx="1.5" ry="2" fill="#2b4152"/><ellipse cx="7.4" cy="13" rx="1.5" ry="2" fill="#2b4152"/><path d="M5.4 1.3v15.5M.8 8.8l9 1" fill="none" stroke="#24343f" stroke-width="0.7"/></g>
<text x="85" y="551.8" font-size="14" fill="#1a1a1a" textLength="73.5" lengthAdjust="spacingAndGlyphs" font-weight="bold">2x1 Convert</text>
<rect x="199" y="537" width="2" height="2" fill="#222"/><rect x="199" y="540.3" width="2" height="2" fill="#222"/><rect x="199" y="549.7" width="2" height="2" fill="#222"/><rect x="199" y="553" width="2" height="2" fill="#222"/><circle cx="200" cy="546" r="3.1" fill="#222"/>
<path d="M47 568l5 5-5 5" fill="none" stroke="#333" stroke-width="2" stroke-linejoin="round"/>
<g transform="translate(65.5,566)" fill="none" stroke-linejoin="round" stroke-linecap="round"><path d="M0.6 11.4 V1.6 Q0.6 0.6 1.6 0.6 H5.58 l1.6 2 H13.9 Q14.9 2.6 14.9 3.6 V11.4 z" fill="#fff" stroke="#666" stroke-width="1"/></g>
<text x="86" y="577.8" font-size="14" fill="#2d2d2d" textLength="104" lengthAdjust="spacingAndGlyphs">Polycarb Floor (2)</text>
<g transform="translate(46,591)" fill="none" stroke-linejoin="round" stroke-linecap="round"><circle cx="4.5" cy="4.5" r="3.2" fill="#fff" stroke="#c4c4c4" stroke-width="1.1"/><circle cx="11" cy="12" r="2.2" fill="#fff" stroke="#c4c4c4" stroke-width="1.1"/><path d="M1.3 5.5l8 8.5M7.5 2l5.7 8.3" fill="none" stroke="#c4c4c4" stroke-width="1.1"/></g>
<text x="67" y="603.8" font-size="14" fill="#a3a3a3" textLength="114.5" lengthAdjust="spacingAndGlyphs" font-style="italic">Feeeder Wheel Belt</text>
<rect x="199" y="589" width="2" height="2" fill="#222"/><rect x="199" y="592.3" width="2" height="2" fill="#222"/><rect x="199" y="601.7" width="2" height="2" fill="#222"/><rect x="199" y="605" width="2" height="2" fill="#222"/><circle cx="200" cy="598" r="3.1" fill="#222"/>
<g transform="translate(45,616)" fill="none" stroke-linejoin="round" stroke-linecap="round"><path d="M1.5 7l12.5-1.8 1.5 8-12.5 2.3z" fill="#9a9a9a"/><path d="M0 9.5l1.5-.3.4 2.5-1.5.3zM15 6.8l1.5-.3.4 2.5-1.5.3z" fill="#9a9a9a"/><circle cx="5.8" cy="10" r="2" fill="#fff"/><circle cx="11" cy="9" r="2" fill="#fff"/><circle cx="6.2" cy="10" r=".9" fill="#9a9a9a"/><circle cx="11.4" cy="9" r=".9" fill="#9a9a9a"/><path d="M7.5 6v-3M5 3.2l2.5 1 2.5-1M4.5 1v3M10.5 1v3" fill="none" stroke="#9a9a9a" stroke-width="1"/></g>
<text x="67" y="629.8" font-size="14" fill="#a3a3a3" textLength="115" lengthAdjust="spacingAndGlyphs" font-style="italic">Feeder Wheel Shaft</text>
<rect x="199" y="615" width="2" height="2" fill="#222"/><rect x="199" y="618.3" width="2" height="2" fill="#222"/><rect x="199" y="627.7" width="2" height="2" fill="#222"/><rect x="199" y="631" width="2" height="2" fill="#222"/><circle cx="200" cy="624" r="3.1" fill="#222"/>
<path d="M47 646l5 5-5 5" fill="none" stroke="#333" stroke-width="2" stroke-linejoin="round"/>
<g transform="translate(65.5,644)" fill="none" stroke-linejoin="round" stroke-linecap="round"><path d="M0.6 11.4 V1.6 Q0.6 0.6 1.6 0.6 H5.58 l1.6 2 H13.9 Q14.9 2.6 14.9 3.6 V11.4 z" fill="#fff" stroke="#666" stroke-width="1"/></g>
<text x="86" y="655.8" font-size="14" fill="#2d2d2d" textLength="76" lengthAdjust="spacingAndGlyphs">Pocketing (2)</text>
<rect x="45" y="673.6" width="190" height="6.8" fill="#b0b0b0"/>
<line x1="40" y1="704.5" x2="240" y2="704.5" stroke="#cfcfcf" stroke-width="1" />
<path d="M45.5 715.2l5 5 5-5" fill="none" stroke="#333" stroke-width="2" stroke-linejoin="round"/>
<text x="63" y="722.7" font-size="14" fill="#2d2d2d" textLength="50" lengthAdjust="spacingAndGlyphs">Parts (5)</text>
<rect x="40" y="836.2" width="200" height="23.3" fill="#b5daf3"/>
<g transform="translate(65,736)" fill="none" stroke-linejoin="round" stroke-linecap="round"><path d="M6.8 .8h4.7q2.2 0 2.2 2.2v10q0 2-2 2h-8.7q-2.2 0-2.2-2.2v-3q0-2.2 2.2-2.2h3.8z" fill="#fff" stroke="#4a4a4a" stroke-width="1"/><path d="M8.7 2.6h3v10.2h-9.2v-3h6.2zM6.8 .8l1.9 1.8M.8 8l1.7 1.8M11.7 2.6l1.7-.9M2.5 12.8l-1.2 1.2" fill="none" stroke="#5a5a5a" stroke-width="0.8"/></g>
<text x="85" y="748.8" font-size="14" fill="#2d2d2d" textLength="68" lengthAdjust="spacingAndGlyphs">Origin Cube</text>
<g transform="translate(65,762)" fill="none" stroke-linejoin="round" stroke-linecap="round"><path d="M6.8 .8h4.7q2.2 0 2.2 2.2v10q0 2-2 2h-8.7q-2.2 0-2.2-2.2v-3q0-2.2 2.2-2.2h3.8z" fill="#fff" stroke="#4a4a4a" stroke-width="1"/><path d="M8.7 2.6h3v10.2h-9.2v-3h6.2zM6.8 .8l1.9 1.8M.8 8l1.7 1.8M11.7 2.6l1.7-.9M2.5 12.8l-1.2 1.2" fill="none" stroke="#5a5a5a" stroke-width="0.8"/></g>
<text x="85" y="774.8" font-size="14" fill="#2d2d2d" textLength="88" lengthAdjust="spacingAndGlyphs">Tube 1"x1"x12"</text>
<g transform="translate(65,788)" fill="none" stroke-linejoin="round" stroke-linecap="round"><path d="M6.8 .8h4.7q2.2 0 2.2 2.2v10q0 2-2 2h-8.7q-2.2 0-2.2-2.2v-3q0-2.2 2.2-2.2h3.8z" fill="#fff" stroke="#4a4a4a" stroke-width="1"/><path d="M8.7 2.6h3v10.2h-9.2v-3h6.2zM6.8 .8l1.9 1.8M.8 8l1.7 1.8M11.7 2.6l1.7-.9M2.5 12.8l-1.2 1.2" fill="none" stroke="#5a5a5a" stroke-width="0.8"/></g>
<text x="85" y="800.8" font-size="14" fill="#2d2d2d" textLength="30" lengthAdjust="spacingAndGlyphs">Plate</text>
<g transform="translate(65,814)" fill="none" stroke-linejoin="round" stroke-linecap="round"><path d="M6.8 .8h4.7q2.2 0 2.2 2.2v10q0 2-2 2h-8.7q-2.2 0-2.2-2.2v-3q0-2.2 2.2-2.2h3.8z" fill="#fff" stroke="#4a4a4a" stroke-width="1"/><path d="M8.7 2.6h3v10.2h-9.2v-3h6.2zM6.8 .8l1.9 1.8M.8 8l1.7 1.8M11.7 2.6l1.7-.9M2.5 12.8l-1.2 1.2" fill="none" stroke="#5a5a5a" stroke-width="0.8"/></g>
<text x="85" y="826.8" font-size="14" fill="#2d2d2d" textLength="63" lengthAdjust="spacingAndGlyphs">zREF Plate</text>
<g transform="translate(65,840)" fill="none" stroke-linejoin="round" stroke-linecap="round"><path d="M6.8 .8h4.7q2.2 0 2.2 2.2v10q0 2-2 2h-8.7q-2.2 0-2.2-2.2v-3q0-2.2 2.2-2.2h3.8z" fill="#fff" stroke="#4a4a4a" stroke-width="1"/><path d="M8.7 2.6h3v10.2h-9.2v-3h6.2zM6.8 .8l1.9 1.8M.8 8l1.7 1.8M11.7 2.6l1.7-.9M2.5 12.8l-1.2 1.2" fill="none" stroke="#5a5a5a" stroke-width="0.8"/></g>
<text x="85" y="852.8" font-size="14" fill="#2d2d2d" textLength="82.5" lengthAdjust="spacingAndGlyphs">Tube 2"x1"x8"</text>
<rect x="245.5" y="538.3" width="32" height="33.2" fill="#fff" stroke="#cfcfcf" stroke-width="1"/>
<rect x="245" y="539" width="2" height="32" fill="#fff"/>
<g transform="translate(252,547)" fill="none" stroke-linejoin="round" stroke-linecap="round"><path d="M0 1l2.3 2.3 2.3-2.3" fill="none" stroke="#444" stroke-width="1.3"/><path d="M3.5 6v12" fill="none" stroke="#444" stroke-width="1.7"/><path d="M7 3.3h12M7 8h12M7 12.7h12M7 17.4h12" fill="none" stroke="#444" stroke-width="1.2"/></g>
</g>
<g id="dialog">
<filter id="dsh" x="-10%" y="-10%" width="120%" height="125%"><feGaussianBlur in="SourceAlpha" stdDeviation="5"/><feOffset dx="0" dy="4"/><feComponentTransfer><feFuncA type="linear" slope="0.3"/></feComponentTransfer><feMerge><feMergeNode/><feMergeNode in="SourceGraphic"/></feMerge></filter>
<rect x="322" y="79" width="280.5" height="526.7" fill="#ffffff" filter="url(#dsh)"/>
<line x1="322" y1="107.5" x2="602.5" y2="107.5" stroke="#d6d6d6" stroke-width="1" />
<text x="328.5" y="97.5" font-size="13.5" fill="#222" textLength="69.5" lengthAdjust="spacingAndGlyphs" font-weight="bold">2x1 Convert</text>
<rect x="546.5" y="79" width="28" height="28" fill="#118a11"/>
<path d="M553 93.5l5.2 5 10-10.2" fill="none" stroke="#fff" stroke-width="3" stroke-linecap="square"/>
<path d="M584.2 89.5l9.6 9.6M593.8 89.5l-9.6 9.6" fill="none" stroke="#c62828" stroke-width="3"/>
<rect x="325.5" y="113.5" width="274" height="43" fill="#dcedf8" stroke="#2a5fb4" stroke-width="1.2" rx="1.5"/>
<text x="331.5" y="128" font-size="10.5" fill="#444" textLength="77" lengthAdjust="spacingAndGlyphs" stroke="#444" stroke-width="0.2">Bodies to convert</text>
<text x="332.5" y="150" font-size="14.5" fill="#555" textLength="34.5" lengthAdjust="spacingAndGlyphs">Part 5</text>
<path d="M580.5 141.5l7 7M587.5 141.5l-7 7" fill="none" stroke="#555" stroke-width="1"/>
<text x="327" y="181.7" font-size="13.5" fill="#555" textLength="80" lengthAdjust="spacingAndGlyphs">Wall Thickness</text>
<line x1="412" y1="187.3" x2="576.5" y2="187.3" stroke="#d0d0d0" stroke-width="1" />
<text x="527" y="181.7" font-size="14.5" fill="#2b2b2b" textLength="46.5" lengthAdjust="spacingAndGlyphs">0.063 in</text>
<rect x="326" y="196" width="12" height="12" fill="#1b5bb5" rx="2.2"/><path d="M328.5 202.2l2.6 2.6 4.5-5.2" fill="none" stroke="#fff" stroke-width="2" stroke-linecap="round" stroke-linejoin="round"/>
<text x="342" y="207" font-size="14.5" fill="#555" textLength="73.5" lengthAdjust="spacingAndGlyphs">Hole Pattern</text>
<rect x="325.5" y="220.5" width="274" height="25" fill="#fff" stroke="#cfcfcf" stroke-width="1" rx="2"/>
<text x="332" y="238" font-size="13.5" fill="#555" textLength="126.5" lengthAdjust="spacingAndGlyphs">Direction Hint (Optional)</text>
<rect x="325.5" y="251.5" width="274" height="25" fill="#fff" stroke="#cfcfcf" stroke-width="1" rx="2"/>
<text x="332" y="269" font-size="13.5" fill="#555" textLength="86.5" lengthAdjust="spacingAndGlyphs">Exclude Regions</text>
<text x="327" y="301.5" font-size="13.5" fill="#555" textLength="68.5" lengthAdjust="spacingAndGlyphs">2" Face Style</text>
<text x="407" y="300" font-size="15.5" fill="#2b2b2b" textLength="108" lengthAdjust="spacingAndGlyphs">1" Between Holes</text>
<line x1="401" y1="307.5" x2="576.5" y2="307.5" stroke="#d0d0d0" stroke-width="1" />
<path d="M563 293h7.6l-3.8 4z" fill="#222"/>
<text x="327" y="329.5" font-size="13.5" fill="#555" textLength="68" lengthAdjust="spacingAndGlyphs">1" Face Style</text>
<text x="407" y="328" font-size="15.5" fill="#2b2b2b" textLength="54" lengthAdjust="spacingAndGlyphs">One Row</text>
<line x1="401" y1="335.5" x2="576.5" y2="335.5" stroke="#d0d0d0" stroke-width="1" />
<path d="M563 321h7.6l-3.8 4z" fill="#222"/>
<rect x="326" y="346" width="12" height="12" fill="#1b5bb5" rx="2.2"/><path d="M328.5 352.2l2.6 2.6 4.5-5.2" fill="none" stroke="#fff" stroke-width="2" stroke-linecap="round" stroke-linejoin="round"/>
<text x="342" y="358" font-size="14.5" fill="#555" textLength="142" lengthAdjust="spacingAndGlyphs">Mike Mode (Center Row)</text>
<text x="327" y="385.2" font-size="13.5" fill="#555" textLength="69" lengthAdjust="spacingAndGlyphs">Hole Spacing</text>
<line x1="401" y1="391.5" x2="576.5" y2="391.5" stroke="#d0d0d0" stroke-width="1" />
<text x="541.5" y="385.7" font-size="14.5" fill="#2b2b2b" textLength="32" lengthAdjust="spacingAndGlyphs">0.5 in</text>
<text x="327" y="411.2" font-size="13.5" fill="#555" textLength="49" lengthAdjust="spacingAndGlyphs">Hole Size</text>
<line x1="381.5" y1="417.5" x2="576.5" y2="417.5" stroke="#d0d0d0" stroke-width="1" />
<text x="527.5" y="411.7" font-size="14.5" fill="#2b2b2b" textLength="46" lengthAdjust="spacingAndGlyphs">0.196 in</text>
<text x="327" y="437" font-size="13.5" fill="#555" textLength="174" lengthAdjust="spacingAndGlyphs">Hole/Feature Intersection Margin</text>
<line x1="505.5" y1="443.5" x2="576.5" y2="443.5" stroke="#d0d0d0" stroke-width="1" />
<text x="552.5" y="437.5" font-size="14.5" fill="#2b2b2b" textLength="21" lengthAdjust="spacingAndGlyphs">0 in</text>
<text x="328" y="461.7" font-size="16" fill="#2b2b2b" textLength="109" lengthAdjust="spacingAndGlyphs">Centered on Tube</text>
<line x1="322" y1="469.5" x2="576.5" y2="469.5" stroke="#d0d0d0" stroke-width="1" />
<path d="M563 454h7.6l-3.8 4z" fill="#222"/>
<text x="327" y="491" font-size="13.5" fill="#555" textLength="100" lengthAdjust="spacingAndGlyphs">Pattern start offset</text>
<line x1="432" y1="497.5" x2="576.5" y2="497.5" stroke="#d0d0d0" stroke-width="1" />
<text x="552.5" y="491.5" font-size="14.5" fill="#2b2b2b" textLength="21" lengthAdjust="spacingAndGlyphs">0 in</text>
<text x="327" y="517" font-size="13.5" fill="#555" textLength="94.5" lengthAdjust="spacingAndGlyphs">End Margin Offset</text>
<line x1="426.5" y1="523.3" x2="576.5" y2="523.3" stroke="#d0d0d0" stroke-width="1" />
<text x="552.5" y="517.5" font-size="14.5" fill="#2b2b2b" textLength="21" lengthAdjust="spacingAndGlyphs">0 in</text>
<rect x="326.5" y="532.5" width="11" height="11" fill="#fff" stroke="#6a6a6a" stroke-width="1.1" rx="2.2"/>
<text x="342" y="542.7" font-size="14.5" fill="#555" textLength="83" lengthAdjust="spacingAndGlyphs">Custom Name</text>
<rect x="326.5" y="559.5" width="11" height="11" fill="#fff" stroke="#6a6a6a" stroke-width="1.1" rx="2.2"/>
<text x="342" y="569.7" font-size="14.5" fill="#555" textLength="88" lengthAdjust="spacingAndGlyphs">Name in Metric</text>
<line x1="328.7" y1="593.2" x2="440.5" y2="593.2" stroke="#555" stroke-width="1.7" />
<circle cx="406.3" cy="593.3" r="5.2" fill="#fff" stroke="#9a9a9a" stroke-width="1.1"/>
<rect x="528.5" y="581.5" width="48" height="21" fill="#fff" stroke="#9a9a9a" stroke-width="1" rx="3"/>
<text x="539" y="596.7" font-size="14" fill="#333" textLength="26.5" lengthAdjust="spacingAndGlyphs">Final</text>
</g>
<g id="tabs">
<rect x="40" y="1049.5" width="33.5" height="29.5" fill="#d4d4d4"/>
<path d="M49 1064.5h15M56.5 1057v15" fill="none" stroke="#666" stroke-width="2.7"/>
<path d="M74 1050H106l7 14.5-7 14.5H74z" fill="#f2f2f2"/>
<g transform="translate(83,1054)" fill="none" stroke-linejoin="round" stroke-linecap="round"><path d="M9 0l9 8.5h-2.5v7.5h-4.5v-5h-4v5h-4.5v-7.5h-2.5zM13 1h2.5v3.5l-2.5-2.3z" fill="#6a6a6a"/></g>
<path d="M108 1050H238l7.5 14.5-7.5 14.5H108l7-14.5z" fill="#ffffff"/>
<text x="130" y="1068" font-size="15.5" fill="#666" textLength="93.5" lengthAdjust="spacingAndGlyphs">Exercise 1: Flat</text>
<rect x="247.5" y="1050" width="200.5" height="29" fill="#e3e3e3"/>
<line x1="448.5" y1="1050" x2="448.5" y2="1079" stroke="#c8c8c8" stroke-width="1" />
<circle cx="266.5" cy="1063" r="6.6" fill="#5b9bd8"/><circle cx="266.5" cy="1063" r="2.6" fill="#fff"/><rect x="265.3" y="1057" width="2.4" height="3.5" fill="#fff"/><rect x="265.3" y="1065.5" width="2.4" height="3.5" fill="#fff"/>
<g transform="translate(278,1054)" fill="none" stroke-linejoin="round" stroke-linecap="round"><path d="M.7 .7h12l5 4v13h-12l-5-4z" fill="#fff" stroke="#333" stroke-width="1.2"/><rect x="5.7" y="4.7" width="7" height="8.5" fill="#8a8a8a" stroke="#333" stroke-width="1"/><path d="M.7 .7l5 4h12M5.7 4.7v13" fill="none" stroke="#333" stroke-width="1"/></g>
<text x="300" y="1069" font-size="15.5" fill="#666" textLength="127" lengthAdjust="spacingAndGlyphs">Exercise 1 Assembly</text>
<rect x="449.5" y="1050" width="199" height="29" fill="#ffffff"/>
<rect x="452" y="1075.7" width="194" height="2.3" fill="#1b5fc1" rx="1"/>
<g transform="translate(461,1055)" fill="none" stroke-linejoin="round" stroke-linecap="round"><path d="M.7 5l2-1.5h4.5v13.5h-6.5zM9 2.5l2-2h4.5l1 1v15.5h-7.5z" fill="#fff" stroke="#333" stroke-width="1.2"/><path d="M3.5 3.5v13M11.5 .7v16" fill="none" stroke="#333" stroke-width="0.9"/></g>
<text x="482.3" y="1069" font-size="15.5" fill="#222" textLength="134.3" lengthAdjust="spacingAndGlyphs">Exercise 1 Part Studio</text>
<line x1="40" y1="1049.5" x2="1919" y2="1049.5" stroke="#cfcfcf" stroke-width="1" />
</g>
</svg></body></html>
